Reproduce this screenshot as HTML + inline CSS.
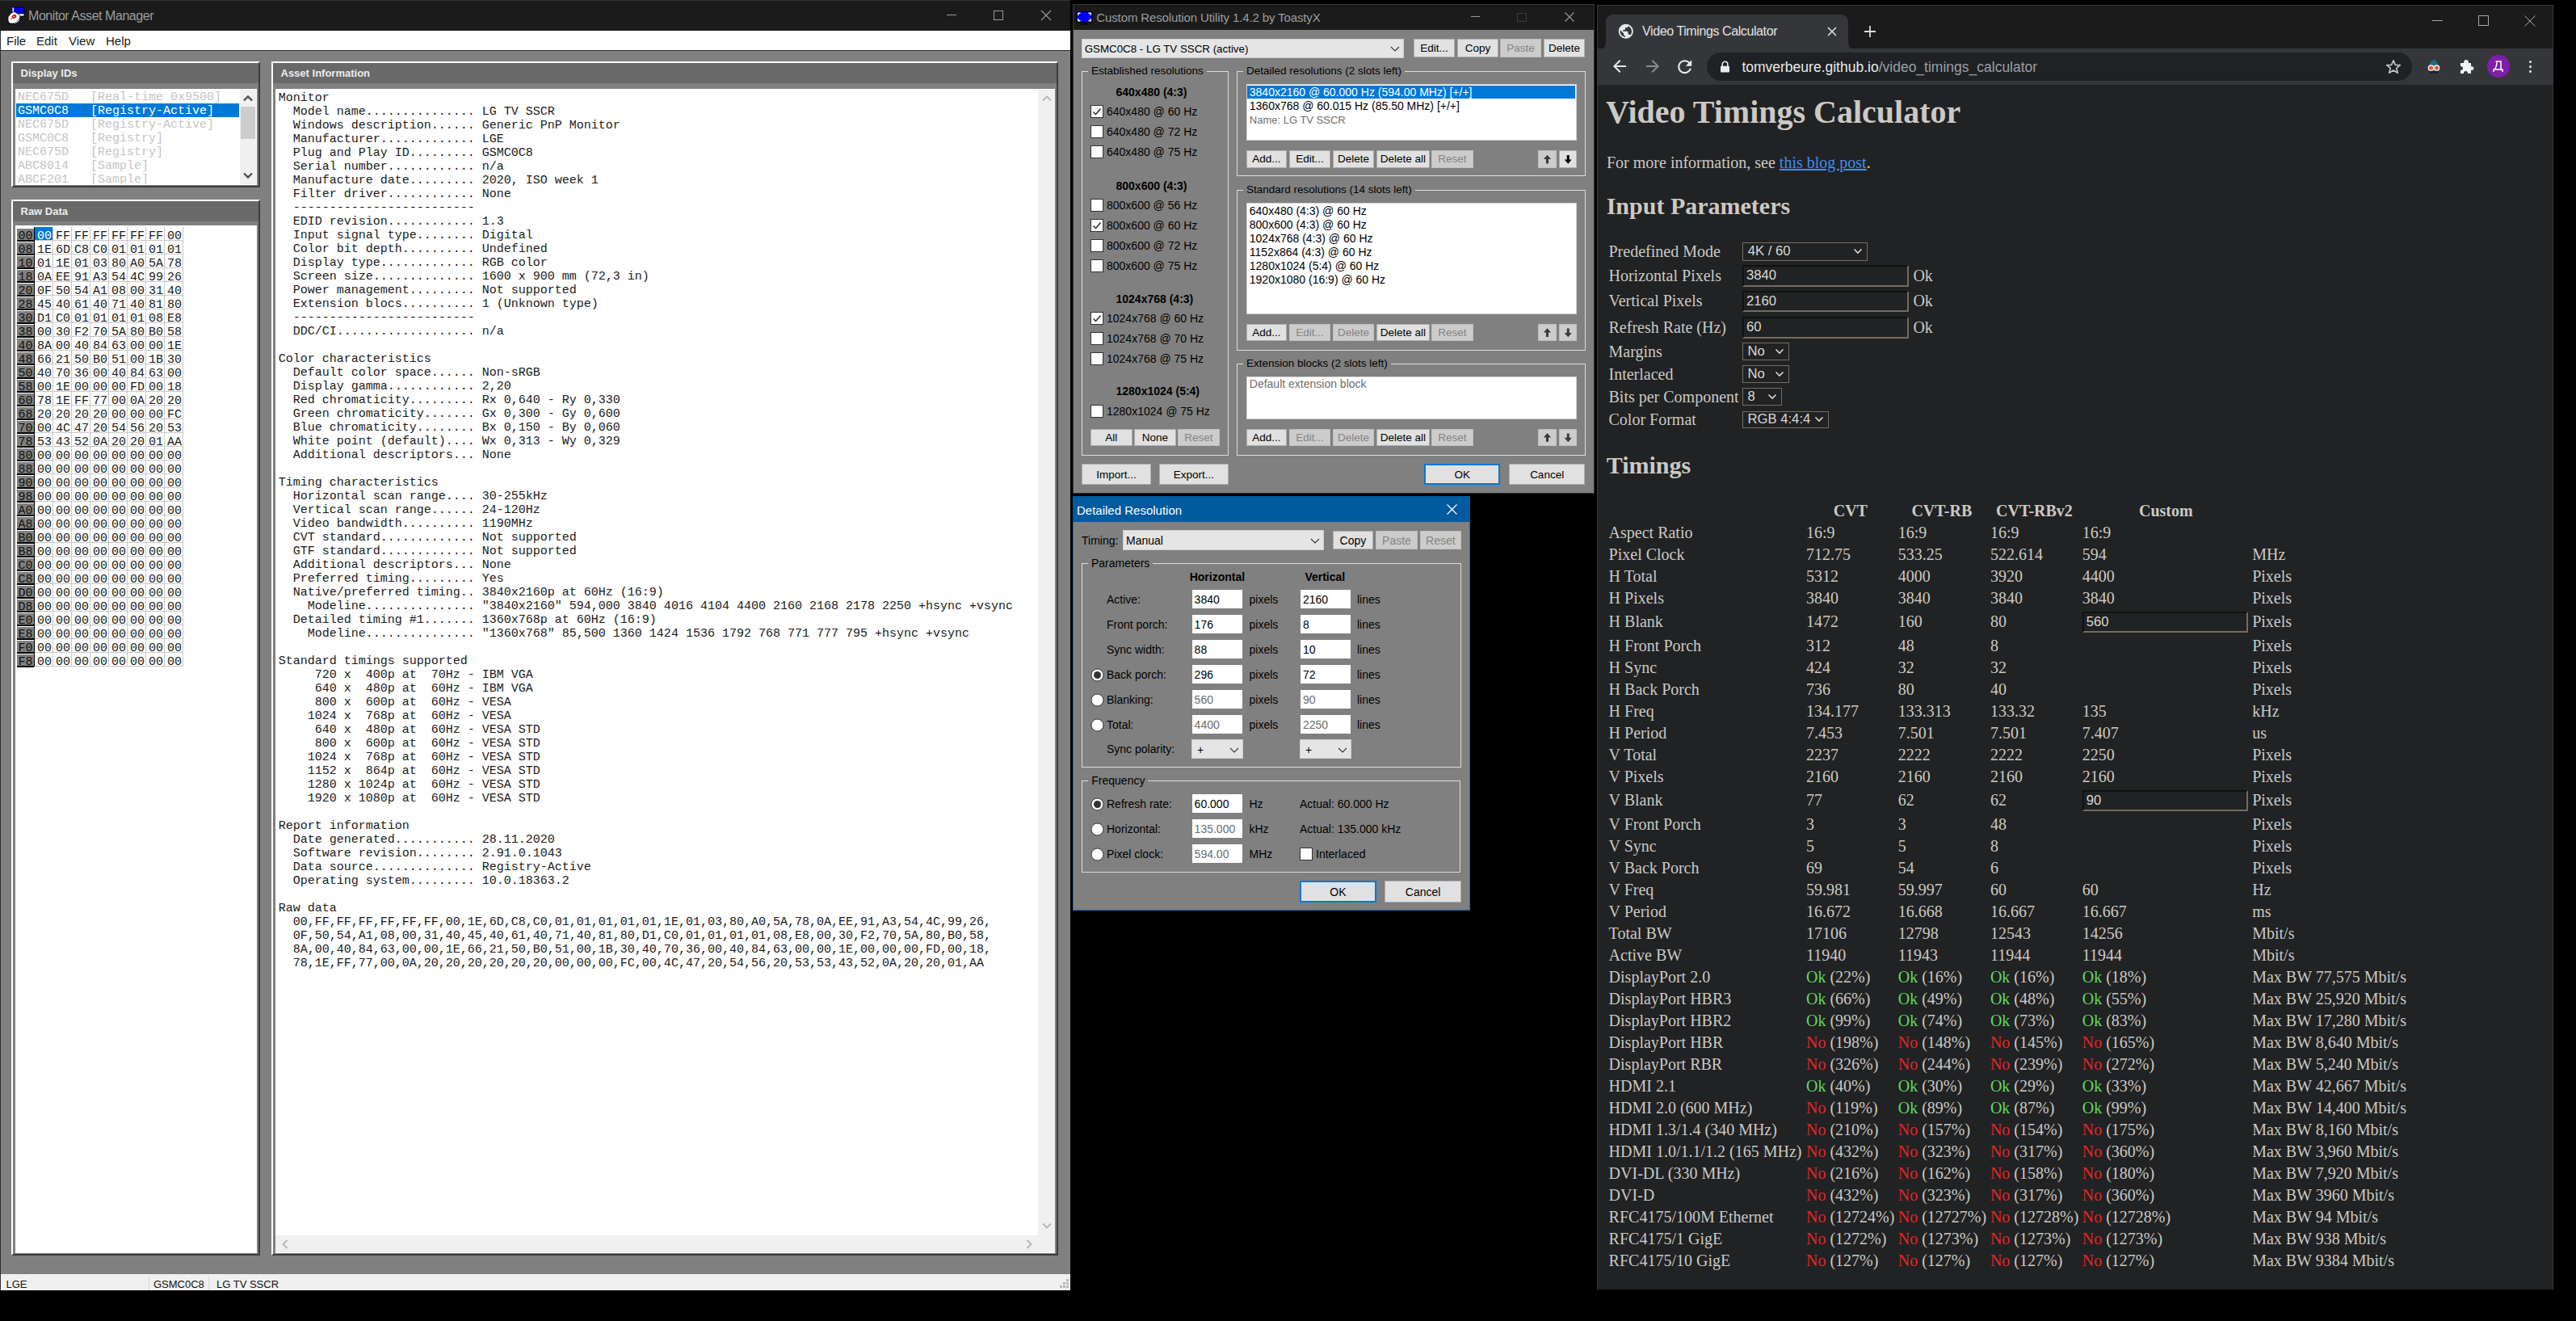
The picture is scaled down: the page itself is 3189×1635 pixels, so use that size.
<!DOCTYPE html>
<html><head><meta charset="utf-8"><title>Screen</title><style>*{box-sizing:border-box;margin:0;padding:0}
html,body{width:3189px;height:1635px;overflow:hidden;background:#000}
body{position:relative;font-family:"Liberation Sans",sans-serif}
.a{position:absolute}
.t{position:absolute;white-space:pre}
svg.a{overflow:visible}</style></head><body>
<div class="a" style="left:0.0px;top:0.0px;width:1325.0px;height:1597.0px;background:#808080;"></div>
<div class="a" style="left:0.0px;top:0.0px;width:1.0px;height:1597.0px;background:#2e2e2e;"></div>
<div class="a" style="left:0.0px;top:0.0px;width:1325.0px;height:37.7px;background:#1b1b1b;"></div>
<svg class="a" style="left:9.0px;top:8.0px;" width="22" height="22" viewBox="0 0 22 22"><defs><linearGradient id="ig" x1="0" y1="0" x2="0" y2="1"><stop offset="0" stop-color="#0000ff"/><stop offset="1" stop-color="#000090"/></linearGradient></defs><rect x="6" y="1" width="15" height="11" fill="url(#ig)" stroke="#000" stroke-width="0.8"/><rect x="6.5" y="1.5" width="1.5" height="9" fill="#fff"/><rect x="6.5" y="9.3" width="14" height="2.3" fill="#fff"/><path d="M1,13 L5,8 L9,6.5 L13,9 L16,12 L15,17 L11,21 L3,21 L1,18 Z" fill="#fff" stroke="#000" stroke-width="0.8"/><path d="M6,13.5 Q7,10.5 10,11 Q11.5,12 9.5,13.5 L6.5,14.5" stroke="#c00000" stroke-width="1.6" fill="none"/><circle cx="5" cy="15.5" r="0.8" fill="#d00"/><path d="M10,20 L15,15 M12,20 L15.5,16.5" stroke="#6a6aa8" stroke-width="1"/></svg>
<div class="t" style="left:35.0px;top:11.7px;font:16px/1 'Liberation Sans',sans-serif;color:#9d9d9d;letter-spacing:-0.45px;">Monitor Asset Manager</div>
<div class="a" style="left:0.0px;top:0.0px;width:1325.0px;height:1.0px;background:#333;"></div>
<div class="a" style="left:1172.0px;top:18.0px;width:12.0px;height:1.0px;background:#9a9a9a;"></div>
<div class="a" style="left:1230.0px;top:13.0px;width:12.0px;height:12.0px;border:1px solid #9a9a9a;"></div>
<svg class="a" style="left:1288.0px;top:12.0px;" width="14" height="14" viewBox="0 0 14 14"><path d="M1,1 L13,13 M13,1 L1,13" stroke="#9a9a9a" stroke-width="1.1"/></svg>
<div class="a" style="left:1.0px;top:37.7px;width:1324.0px;height:24.3px;background:#fff;"></div>
<div class="a" style="left:1.0px;top:62.0px;width:1324.0px;height:1.0px;background:#2c2c2c;"></div>
<div class="t" style="left:8.0px;top:43.2px;font:15px/1 'Liberation Sans',sans-serif;color:#1a1a1a;">File</div>
<div class="t" style="left:45.0px;top:43.2px;font:15px/1 'Liberation Sans',sans-serif;color:#1a1a1a;">Edit</div>
<div class="t" style="left:85.0px;top:43.2px;font:15px/1 'Liberation Sans',sans-serif;color:#1a1a1a;">View</div>
<div class="t" style="left:131.0px;top:43.2px;font:15px/1 'Liberation Sans',sans-serif;color:#1a1a1a;">Help</div>
<div class="a" style="left:1.0px;top:1577.0px;width:1324.0px;height:20.0px;background:#f0f0f0;"></div>
<div class="t" style="left:7.5px;top:1583.0px;font:13px/1 'Liberation Sans',sans-serif;color:#111;">LGE</div>
<div class="a" style="left:184.0px;top:1580.0px;width:1.0px;height:17.0px;background:#d9d9d9;"></div>
<div class="t" style="left:190.0px;top:1583.0px;font:13px/1 'Liberation Sans',sans-serif;color:#111;">GSMC0C8</div>
<div class="a" style="left:258.0px;top:1580.0px;width:1.0px;height:17.0px;background:#d9d9d9;"></div>
<div class="t" style="left:268.0px;top:1583.0px;font:13px/1 'Liberation Sans',sans-serif;color:#111;">LG TV SSCR</div>
<div class="a" style="left:1320.0px;top:1583.0px;width:3.0px;height:3.0px;background:#b8b8b8;"></div>
<div class="a" style="left:1316.0px;top:1587.0px;width:3.0px;height:3.0px;background:#b8b8b8;"></div>
<div class="a" style="left:1320.0px;top:1587.0px;width:3.0px;height:3.0px;background:#b8b8b8;"></div>
<div class="a" style="left:1312.0px;top:1591.0px;width:3.0px;height:3.0px;background:#b8b8b8;"></div>
<div class="a" style="left:1316.0px;top:1591.0px;width:3.0px;height:3.0px;background:#b8b8b8;"></div>
<div class="a" style="left:1320.0px;top:1591.0px;width:3.0px;height:3.0px;background:#b8b8b8;"></div>
<div class="a" style="left:14.0px;top:76.0px;width:308.0px;height:156.0px;background:#808080;border-top:2px solid #fff;border-left:2px solid #fff;border-right:2px solid #3c3c3c;border-bottom:2px solid #3c3c3c;"></div>
<div class="a" style="left:16.0px;top:78.0px;width:304.0px;height:25.0px;background:#696969;"></div>
<div class="t" style="left:25.5px;top:84.0px;font:13px/1 'Liberation Sans',sans-serif;font-weight:700;color:#ededed;">Display IDs</div>
<div class="a" style="left:19.0px;top:110.0px;width:299.0px;height:119.0px;background:#fff;"></div>
<div class="a" style="left:20.0px;top:128.0px;width:276.0px;height:17.0px;background:#0078d7;"></div>
<div class="a" style="left:19.0px;top:111.0px;width:278.0px;height:117.0px;overflow:hidden;"><div class="t" style="left:3.0px;top:2.4px;font:15px/1 'Liberation Mono',monospace;color:#c4c4c4;">NEC675D</div><div class="t" style="left:93.0px;top:2.4px;font:15px/1 'Liberation Mono',monospace;color:#c4c4c4;">[Real-time 0x9500]</div><div class="t" style="left:3.0px;top:19.4px;font:15px/1 'Liberation Mono',monospace;color:#fff;">GSMC0C8</div><div class="t" style="left:93.0px;top:19.4px;font:15px/1 'Liberation Mono',monospace;color:#fff;">[Registry-Active]</div><div class="t" style="left:3.0px;top:36.4px;font:15px/1 'Liberation Mono',monospace;color:#c4c4c4;">NEC675D</div><div class="t" style="left:93.0px;top:36.4px;font:15px/1 'Liberation Mono',monospace;color:#c4c4c4;">[Registry-Active]</div><div class="t" style="left:3.0px;top:53.4px;font:15px/1 'Liberation Mono',monospace;color:#c4c4c4;">GSMC0C8</div><div class="t" style="left:93.0px;top:53.4px;font:15px/1 'Liberation Mono',monospace;color:#c4c4c4;">[Registry]</div><div class="t" style="left:3.0px;top:70.4px;font:15px/1 'Liberation Mono',monospace;color:#c4c4c4;">NEC675D</div><div class="t" style="left:93.0px;top:70.4px;font:15px/1 'Liberation Mono',monospace;color:#c4c4c4;">[Registry]</div><div class="t" style="left:3.0px;top:87.4px;font:15px/1 'Liberation Mono',monospace;color:#c4c4c4;">ABC8014</div><div class="t" style="left:93.0px;top:87.4px;font:15px/1 'Liberation Mono',monospace;color:#c4c4c4;">[Sample]</div><div class="t" style="left:3.0px;top:104.4px;font:15px/1 'Liberation Mono',monospace;color:#c4c4c4;">ABCF201</div><div class="t" style="left:93.0px;top:104.4px;font:15px/1 'Liberation Mono',monospace;color:#c4c4c4;">[Sample]</div></div>
<div class="a" style="left:297.0px;top:111.0px;width:20.0px;height:117.0px;background:#f0f0f0;"></div>
<div class="a" style="left:298.0px;top:132.0px;width:18.0px;height:40.0px;background:#cdcdcd;"></div>
<svg class="a" style="left:300.0px;top:115.0px;" width="14" height="14" viewBox="0 0 14 14"><path d="M-5,2.5 L0,-2.5 L5,2.5" transform="translate(7.0,7.0)" fill="none" stroke="#505050" stroke-width="2.4"/></svg>
<svg class="a" style="left:300.0px;top:209.5px;" width="14" height="14" viewBox="0 0 14 14"><path d="M-5,-2.5 L0,2.5 L5,-2.5" transform="translate(7.0,7.0)" fill="none" stroke="#505050" stroke-width="2.4"/></svg>
<div class="a" style="left:14.0px;top:247.0px;width:308.0px;height:1307.0px;background:#808080;border-top:2px solid #fff;border-left:2px solid #fff;border-right:2px solid #3c3c3c;border-bottom:2px solid #3c3c3c;"></div>
<div class="a" style="left:16.0px;top:249.0px;width:304.0px;height:25.0px;background:#696969;"></div>
<div class="t" style="left:25.5px;top:254.9px;font:13px/1 'Liberation Sans',sans-serif;font-weight:700;color:#ededed;">Raw Data</div>
<div class="a" style="left:19.0px;top:279.0px;width:299.0px;height:1272.0px;background:#fff;"></div>
<div class="a" style="left:21.0px;top:282.0px;width:21.0px;height:15.0px;background:#808080;border-top:1px solid #fff;"></div>
<div class="a" style="left:21.0px;top:297.0px;width:21.0px;height:1.5px;background:#000;"></div>
<div class="t" style="left:22.5px;top:284.6px;font:15px/1 'Liberation Mono',monospace;color:#111;">00</div>
<div class="a" style="left:43.0px;top:281.0px;width:22.0px;height:16.0px;background:#0078d7;"></div>
<div class="t" style="left:46.0px;top:284.6px;font:15px/1 'Liberation Mono',monospace;color:#fff;">00</div>
<div class="t" style="left:69.0px;top:284.6px;font:15px/1 'Liberation Mono',monospace;color:#1a1a1a;">FF</div>
<div class="t" style="left:92.0px;top:284.6px;font:15px/1 'Liberation Mono',monospace;color:#1a1a1a;">FF</div>
<div class="t" style="left:115.0px;top:284.6px;font:15px/1 'Liberation Mono',monospace;color:#1a1a1a;">FF</div>
<div class="t" style="left:138.0px;top:284.6px;font:15px/1 'Liberation Mono',monospace;color:#1a1a1a;">FF</div>
<div class="t" style="left:161.0px;top:284.6px;font:15px/1 'Liberation Mono',monospace;color:#1a1a1a;">FF</div>
<div class="t" style="left:184.0px;top:284.6px;font:15px/1 'Liberation Mono',monospace;color:#1a1a1a;">FF</div>
<div class="t" style="left:207.0px;top:284.6px;font:15px/1 'Liberation Mono',monospace;color:#1a1a1a;">00</div>
<div class="a" style="left:21.0px;top:299.0px;width:21.0px;height:15.0px;background:#808080;border-top:1px solid #fff;"></div>
<div class="a" style="left:21.0px;top:314.0px;width:21.0px;height:1.5px;background:#000;"></div>
<div class="t" style="left:22.5px;top:301.6px;font:15px/1 'Liberation Mono',monospace;color:#111;">08</div>
<div class="t" style="left:46.0px;top:301.6px;font:15px/1 'Liberation Mono',monospace;color:#1a1a1a;">1E</div>
<div class="t" style="left:69.0px;top:301.6px;font:15px/1 'Liberation Mono',monospace;color:#1a1a1a;">6D</div>
<div class="t" style="left:92.0px;top:301.6px;font:15px/1 'Liberation Mono',monospace;color:#1a1a1a;">C8</div>
<div class="t" style="left:115.0px;top:301.6px;font:15px/1 'Liberation Mono',monospace;color:#1a1a1a;">C0</div>
<div class="t" style="left:138.0px;top:301.6px;font:15px/1 'Liberation Mono',monospace;color:#1a1a1a;">01</div>
<div class="t" style="left:161.0px;top:301.6px;font:15px/1 'Liberation Mono',monospace;color:#1a1a1a;">01</div>
<div class="t" style="left:184.0px;top:301.6px;font:15px/1 'Liberation Mono',monospace;color:#1a1a1a;">01</div>
<div class="t" style="left:207.0px;top:301.6px;font:15px/1 'Liberation Mono',monospace;color:#1a1a1a;">01</div>
<div class="a" style="left:21.0px;top:316.0px;width:21.0px;height:15.0px;background:#808080;border-top:1px solid #fff;"></div>
<div class="a" style="left:21.0px;top:331.0px;width:21.0px;height:1.5px;background:#000;"></div>
<div class="t" style="left:22.5px;top:318.6px;font:15px/1 'Liberation Mono',monospace;color:#111;">10</div>
<div class="t" style="left:46.0px;top:318.6px;font:15px/1 'Liberation Mono',monospace;color:#1a1a1a;">01</div>
<div class="t" style="left:69.0px;top:318.6px;font:15px/1 'Liberation Mono',monospace;color:#1a1a1a;">1E</div>
<div class="t" style="left:92.0px;top:318.6px;font:15px/1 'Liberation Mono',monospace;color:#1a1a1a;">01</div>
<div class="t" style="left:115.0px;top:318.6px;font:15px/1 'Liberation Mono',monospace;color:#1a1a1a;">03</div>
<div class="t" style="left:138.0px;top:318.6px;font:15px/1 'Liberation Mono',monospace;color:#1a1a1a;">80</div>
<div class="t" style="left:161.0px;top:318.6px;font:15px/1 'Liberation Mono',monospace;color:#1a1a1a;">A0</div>
<div class="t" style="left:184.0px;top:318.6px;font:15px/1 'Liberation Mono',monospace;color:#1a1a1a;">5A</div>
<div class="t" style="left:207.0px;top:318.6px;font:15px/1 'Liberation Mono',monospace;color:#1a1a1a;">78</div>
<div class="a" style="left:21.0px;top:333.0px;width:21.0px;height:15.0px;background:#808080;border-top:1px solid #fff;"></div>
<div class="a" style="left:21.0px;top:348.0px;width:21.0px;height:1.5px;background:#000;"></div>
<div class="t" style="left:22.5px;top:335.6px;font:15px/1 'Liberation Mono',monospace;color:#111;">18</div>
<div class="t" style="left:46.0px;top:335.6px;font:15px/1 'Liberation Mono',monospace;color:#1a1a1a;">0A</div>
<div class="t" style="left:69.0px;top:335.6px;font:15px/1 'Liberation Mono',monospace;color:#1a1a1a;">EE</div>
<div class="t" style="left:92.0px;top:335.6px;font:15px/1 'Liberation Mono',monospace;color:#1a1a1a;">91</div>
<div class="t" style="left:115.0px;top:335.6px;font:15px/1 'Liberation Mono',monospace;color:#1a1a1a;">A3</div>
<div class="t" style="left:138.0px;top:335.6px;font:15px/1 'Liberation Mono',monospace;color:#1a1a1a;">54</div>
<div class="t" style="left:161.0px;top:335.6px;font:15px/1 'Liberation Mono',monospace;color:#1a1a1a;">4C</div>
<div class="t" style="left:184.0px;top:335.6px;font:15px/1 'Liberation Mono',monospace;color:#1a1a1a;">99</div>
<div class="t" style="left:207.0px;top:335.6px;font:15px/1 'Liberation Mono',monospace;color:#1a1a1a;">26</div>
<div class="a" style="left:21.0px;top:350.0px;width:21.0px;height:15.0px;background:#808080;border-top:1px solid #fff;"></div>
<div class="a" style="left:21.0px;top:365.0px;width:21.0px;height:1.5px;background:#000;"></div>
<div class="t" style="left:22.5px;top:352.6px;font:15px/1 'Liberation Mono',monospace;color:#111;">20</div>
<div class="t" style="left:46.0px;top:352.6px;font:15px/1 'Liberation Mono',monospace;color:#1a1a1a;">0F</div>
<div class="t" style="left:69.0px;top:352.6px;font:15px/1 'Liberation Mono',monospace;color:#1a1a1a;">50</div>
<div class="t" style="left:92.0px;top:352.6px;font:15px/1 'Liberation Mono',monospace;color:#1a1a1a;">54</div>
<div class="t" style="left:115.0px;top:352.6px;font:15px/1 'Liberation Mono',monospace;color:#1a1a1a;">A1</div>
<div class="t" style="left:138.0px;top:352.6px;font:15px/1 'Liberation Mono',monospace;color:#1a1a1a;">08</div>
<div class="t" style="left:161.0px;top:352.6px;font:15px/1 'Liberation Mono',monospace;color:#1a1a1a;">00</div>
<div class="t" style="left:184.0px;top:352.6px;font:15px/1 'Liberation Mono',monospace;color:#1a1a1a;">31</div>
<div class="t" style="left:207.0px;top:352.6px;font:15px/1 'Liberation Mono',monospace;color:#1a1a1a;">40</div>
<div class="a" style="left:21.0px;top:367.0px;width:21.0px;height:15.0px;background:#808080;border-top:1px solid #fff;"></div>
<div class="a" style="left:21.0px;top:382.0px;width:21.0px;height:1.5px;background:#000;"></div>
<div class="t" style="left:22.5px;top:369.6px;font:15px/1 'Liberation Mono',monospace;color:#111;">28</div>
<div class="t" style="left:46.0px;top:369.6px;font:15px/1 'Liberation Mono',monospace;color:#1a1a1a;">45</div>
<div class="t" style="left:69.0px;top:369.6px;font:15px/1 'Liberation Mono',monospace;color:#1a1a1a;">40</div>
<div class="t" style="left:92.0px;top:369.6px;font:15px/1 'Liberation Mono',monospace;color:#1a1a1a;">61</div>
<div class="t" style="left:115.0px;top:369.6px;font:15px/1 'Liberation Mono',monospace;color:#1a1a1a;">40</div>
<div class="t" style="left:138.0px;top:369.6px;font:15px/1 'Liberation Mono',monospace;color:#1a1a1a;">71</div>
<div class="t" style="left:161.0px;top:369.6px;font:15px/1 'Liberation Mono',monospace;color:#1a1a1a;">40</div>
<div class="t" style="left:184.0px;top:369.6px;font:15px/1 'Liberation Mono',monospace;color:#1a1a1a;">81</div>
<div class="t" style="left:207.0px;top:369.6px;font:15px/1 'Liberation Mono',monospace;color:#1a1a1a;">80</div>
<div class="a" style="left:21.0px;top:384.0px;width:21.0px;height:15.0px;background:#808080;border-top:1px solid #fff;"></div>
<div class="a" style="left:21.0px;top:399.0px;width:21.0px;height:1.5px;background:#000;"></div>
<div class="t" style="left:22.5px;top:386.6px;font:15px/1 'Liberation Mono',monospace;color:#111;">30</div>
<div class="t" style="left:46.0px;top:386.6px;font:15px/1 'Liberation Mono',monospace;color:#1a1a1a;">D1</div>
<div class="t" style="left:69.0px;top:386.6px;font:15px/1 'Liberation Mono',monospace;color:#1a1a1a;">C0</div>
<div class="t" style="left:92.0px;top:386.6px;font:15px/1 'Liberation Mono',monospace;color:#1a1a1a;">01</div>
<div class="t" style="left:115.0px;top:386.6px;font:15px/1 'Liberation Mono',monospace;color:#1a1a1a;">01</div>
<div class="t" style="left:138.0px;top:386.6px;font:15px/1 'Liberation Mono',monospace;color:#1a1a1a;">01</div>
<div class="t" style="left:161.0px;top:386.6px;font:15px/1 'Liberation Mono',monospace;color:#1a1a1a;">01</div>
<div class="t" style="left:184.0px;top:386.6px;font:15px/1 'Liberation Mono',monospace;color:#1a1a1a;">08</div>
<div class="t" style="left:207.0px;top:386.6px;font:15px/1 'Liberation Mono',monospace;color:#1a1a1a;">E8</div>
<div class="a" style="left:21.0px;top:401.0px;width:21.0px;height:15.0px;background:#808080;border-top:1px solid #fff;"></div>
<div class="a" style="left:21.0px;top:416.0px;width:21.0px;height:1.5px;background:#000;"></div>
<div class="t" style="left:22.5px;top:403.6px;font:15px/1 'Liberation Mono',monospace;color:#111;">38</div>
<div class="t" style="left:46.0px;top:403.6px;font:15px/1 'Liberation Mono',monospace;color:#1a1a1a;">00</div>
<div class="t" style="left:69.0px;top:403.6px;font:15px/1 'Liberation Mono',monospace;color:#1a1a1a;">30</div>
<div class="t" style="left:92.0px;top:403.6px;font:15px/1 'Liberation Mono',monospace;color:#1a1a1a;">F2</div>
<div class="t" style="left:115.0px;top:403.6px;font:15px/1 'Liberation Mono',monospace;color:#1a1a1a;">70</div>
<div class="t" style="left:138.0px;top:403.6px;font:15px/1 'Liberation Mono',monospace;color:#1a1a1a;">5A</div>
<div class="t" style="left:161.0px;top:403.6px;font:15px/1 'Liberation Mono',monospace;color:#1a1a1a;">80</div>
<div class="t" style="left:184.0px;top:403.6px;font:15px/1 'Liberation Mono',monospace;color:#1a1a1a;">B0</div>
<div class="t" style="left:207.0px;top:403.6px;font:15px/1 'Liberation Mono',monospace;color:#1a1a1a;">58</div>
<div class="a" style="left:21.0px;top:418.0px;width:21.0px;height:15.0px;background:#808080;border-top:1px solid #fff;"></div>
<div class="a" style="left:21.0px;top:433.0px;width:21.0px;height:1.5px;background:#000;"></div>
<div class="t" style="left:22.5px;top:420.6px;font:15px/1 'Liberation Mono',monospace;color:#111;">40</div>
<div class="t" style="left:46.0px;top:420.6px;font:15px/1 'Liberation Mono',monospace;color:#1a1a1a;">8A</div>
<div class="t" style="left:69.0px;top:420.6px;font:15px/1 'Liberation Mono',monospace;color:#1a1a1a;">00</div>
<div class="t" style="left:92.0px;top:420.6px;font:15px/1 'Liberation Mono',monospace;color:#1a1a1a;">40</div>
<div class="t" style="left:115.0px;top:420.6px;font:15px/1 'Liberation Mono',monospace;color:#1a1a1a;">84</div>
<div class="t" style="left:138.0px;top:420.6px;font:15px/1 'Liberation Mono',monospace;color:#1a1a1a;">63</div>
<div class="t" style="left:161.0px;top:420.6px;font:15px/1 'Liberation Mono',monospace;color:#1a1a1a;">00</div>
<div class="t" style="left:184.0px;top:420.6px;font:15px/1 'Liberation Mono',monospace;color:#1a1a1a;">00</div>
<div class="t" style="left:207.0px;top:420.6px;font:15px/1 'Liberation Mono',monospace;color:#1a1a1a;">1E</div>
<div class="a" style="left:21.0px;top:435.0px;width:21.0px;height:15.0px;background:#808080;border-top:1px solid #fff;"></div>
<div class="a" style="left:21.0px;top:450.0px;width:21.0px;height:1.5px;background:#000;"></div>
<div class="t" style="left:22.5px;top:437.6px;font:15px/1 'Liberation Mono',monospace;color:#111;">48</div>
<div class="t" style="left:46.0px;top:437.6px;font:15px/1 'Liberation Mono',monospace;color:#1a1a1a;">66</div>
<div class="t" style="left:69.0px;top:437.6px;font:15px/1 'Liberation Mono',monospace;color:#1a1a1a;">21</div>
<div class="t" style="left:92.0px;top:437.6px;font:15px/1 'Liberation Mono',monospace;color:#1a1a1a;">50</div>
<div class="t" style="left:115.0px;top:437.6px;font:15px/1 'Liberation Mono',monospace;color:#1a1a1a;">B0</div>
<div class="t" style="left:138.0px;top:437.6px;font:15px/1 'Liberation Mono',monospace;color:#1a1a1a;">51</div>
<div class="t" style="left:161.0px;top:437.6px;font:15px/1 'Liberation Mono',monospace;color:#1a1a1a;">00</div>
<div class="t" style="left:184.0px;top:437.6px;font:15px/1 'Liberation Mono',monospace;color:#1a1a1a;">1B</div>
<div class="t" style="left:207.0px;top:437.6px;font:15px/1 'Liberation Mono',monospace;color:#1a1a1a;">30</div>
<div class="a" style="left:21.0px;top:452.0px;width:21.0px;height:15.0px;background:#808080;border-top:1px solid #fff;"></div>
<div class="a" style="left:21.0px;top:467.0px;width:21.0px;height:1.5px;background:#000;"></div>
<div class="t" style="left:22.5px;top:454.6px;font:15px/1 'Liberation Mono',monospace;color:#111;">50</div>
<div class="t" style="left:46.0px;top:454.6px;font:15px/1 'Liberation Mono',monospace;color:#1a1a1a;">40</div>
<div class="t" style="left:69.0px;top:454.6px;font:15px/1 'Liberation Mono',monospace;color:#1a1a1a;">70</div>
<div class="t" style="left:92.0px;top:454.6px;font:15px/1 'Liberation Mono',monospace;color:#1a1a1a;">36</div>
<div class="t" style="left:115.0px;top:454.6px;font:15px/1 'Liberation Mono',monospace;color:#1a1a1a;">00</div>
<div class="t" style="left:138.0px;top:454.6px;font:15px/1 'Liberation Mono',monospace;color:#1a1a1a;">40</div>
<div class="t" style="left:161.0px;top:454.6px;font:15px/1 'Liberation Mono',monospace;color:#1a1a1a;">84</div>
<div class="t" style="left:184.0px;top:454.6px;font:15px/1 'Liberation Mono',monospace;color:#1a1a1a;">63</div>
<div class="t" style="left:207.0px;top:454.6px;font:15px/1 'Liberation Mono',monospace;color:#1a1a1a;">00</div>
<div class="a" style="left:21.0px;top:469.0px;width:21.0px;height:15.0px;background:#808080;border-top:1px solid #fff;"></div>
<div class="a" style="left:21.0px;top:484.0px;width:21.0px;height:1.5px;background:#000;"></div>
<div class="t" style="left:22.5px;top:471.6px;font:15px/1 'Liberation Mono',monospace;color:#111;">58</div>
<div class="t" style="left:46.0px;top:471.6px;font:15px/1 'Liberation Mono',monospace;color:#1a1a1a;">00</div>
<div class="t" style="left:69.0px;top:471.6px;font:15px/1 'Liberation Mono',monospace;color:#1a1a1a;">1E</div>
<div class="t" style="left:92.0px;top:471.6px;font:15px/1 'Liberation Mono',monospace;color:#1a1a1a;">00</div>
<div class="t" style="left:115.0px;top:471.6px;font:15px/1 'Liberation Mono',monospace;color:#1a1a1a;">00</div>
<div class="t" style="left:138.0px;top:471.6px;font:15px/1 'Liberation Mono',monospace;color:#1a1a1a;">00</div>
<div class="t" style="left:161.0px;top:471.6px;font:15px/1 'Liberation Mono',monospace;color:#1a1a1a;">FD</div>
<div class="t" style="left:184.0px;top:471.6px;font:15px/1 'Liberation Mono',monospace;color:#1a1a1a;">00</div>
<div class="t" style="left:207.0px;top:471.6px;font:15px/1 'Liberation Mono',monospace;color:#1a1a1a;">18</div>
<div class="a" style="left:21.0px;top:486.0px;width:21.0px;height:15.0px;background:#808080;border-top:1px solid #fff;"></div>
<div class="a" style="left:21.0px;top:501.0px;width:21.0px;height:1.5px;background:#000;"></div>
<div class="t" style="left:22.5px;top:488.6px;font:15px/1 'Liberation Mono',monospace;color:#111;">60</div>
<div class="t" style="left:46.0px;top:488.6px;font:15px/1 'Liberation Mono',monospace;color:#1a1a1a;">78</div>
<div class="t" style="left:69.0px;top:488.6px;font:15px/1 'Liberation Mono',monospace;color:#1a1a1a;">1E</div>
<div class="t" style="left:92.0px;top:488.6px;font:15px/1 'Liberation Mono',monospace;color:#1a1a1a;">FF</div>
<div class="t" style="left:115.0px;top:488.6px;font:15px/1 'Liberation Mono',monospace;color:#1a1a1a;">77</div>
<div class="t" style="left:138.0px;top:488.6px;font:15px/1 'Liberation Mono',monospace;color:#1a1a1a;">00</div>
<div class="t" style="left:161.0px;top:488.6px;font:15px/1 'Liberation Mono',monospace;color:#1a1a1a;">0A</div>
<div class="t" style="left:184.0px;top:488.6px;font:15px/1 'Liberation Mono',monospace;color:#1a1a1a;">20</div>
<div class="t" style="left:207.0px;top:488.6px;font:15px/1 'Liberation Mono',monospace;color:#1a1a1a;">20</div>
<div class="a" style="left:21.0px;top:503.0px;width:21.0px;height:15.0px;background:#808080;border-top:1px solid #fff;"></div>
<div class="a" style="left:21.0px;top:518.0px;width:21.0px;height:1.5px;background:#000;"></div>
<div class="t" style="left:22.5px;top:505.6px;font:15px/1 'Liberation Mono',monospace;color:#111;">68</div>
<div class="t" style="left:46.0px;top:505.6px;font:15px/1 'Liberation Mono',monospace;color:#1a1a1a;">20</div>
<div class="t" style="left:69.0px;top:505.6px;font:15px/1 'Liberation Mono',monospace;color:#1a1a1a;">20</div>
<div class="t" style="left:92.0px;top:505.6px;font:15px/1 'Liberation Mono',monospace;color:#1a1a1a;">20</div>
<div class="t" style="left:115.0px;top:505.6px;font:15px/1 'Liberation Mono',monospace;color:#1a1a1a;">20</div>
<div class="t" style="left:138.0px;top:505.6px;font:15px/1 'Liberation Mono',monospace;color:#1a1a1a;">00</div>
<div class="t" style="left:161.0px;top:505.6px;font:15px/1 'Liberation Mono',monospace;color:#1a1a1a;">00</div>
<div class="t" style="left:184.0px;top:505.6px;font:15px/1 'Liberation Mono',monospace;color:#1a1a1a;">00</div>
<div class="t" style="left:207.0px;top:505.6px;font:15px/1 'Liberation Mono',monospace;color:#1a1a1a;">FC</div>
<div class="a" style="left:21.0px;top:520.0px;width:21.0px;height:15.0px;background:#808080;border-top:1px solid #fff;"></div>
<div class="a" style="left:21.0px;top:535.0px;width:21.0px;height:1.5px;background:#000;"></div>
<div class="t" style="left:22.5px;top:522.6px;font:15px/1 'Liberation Mono',monospace;color:#111;">70</div>
<div class="t" style="left:46.0px;top:522.6px;font:15px/1 'Liberation Mono',monospace;color:#1a1a1a;">00</div>
<div class="t" style="left:69.0px;top:522.6px;font:15px/1 'Liberation Mono',monospace;color:#1a1a1a;">4C</div>
<div class="t" style="left:92.0px;top:522.6px;font:15px/1 'Liberation Mono',monospace;color:#1a1a1a;">47</div>
<div class="t" style="left:115.0px;top:522.6px;font:15px/1 'Liberation Mono',monospace;color:#1a1a1a;">20</div>
<div class="t" style="left:138.0px;top:522.6px;font:15px/1 'Liberation Mono',monospace;color:#1a1a1a;">54</div>
<div class="t" style="left:161.0px;top:522.6px;font:15px/1 'Liberation Mono',monospace;color:#1a1a1a;">56</div>
<div class="t" style="left:184.0px;top:522.6px;font:15px/1 'Liberation Mono',monospace;color:#1a1a1a;">20</div>
<div class="t" style="left:207.0px;top:522.6px;font:15px/1 'Liberation Mono',monospace;color:#1a1a1a;">53</div>
<div class="a" style="left:21.0px;top:537.0px;width:21.0px;height:15.0px;background:#808080;border-top:1px solid #fff;"></div>
<div class="a" style="left:21.0px;top:552.0px;width:21.0px;height:1.5px;background:#000;"></div>
<div class="t" style="left:22.5px;top:539.6px;font:15px/1 'Liberation Mono',monospace;color:#111;">78</div>
<div class="t" style="left:46.0px;top:539.6px;font:15px/1 'Liberation Mono',monospace;color:#1a1a1a;">53</div>
<div class="t" style="left:69.0px;top:539.6px;font:15px/1 'Liberation Mono',monospace;color:#1a1a1a;">43</div>
<div class="t" style="left:92.0px;top:539.6px;font:15px/1 'Liberation Mono',monospace;color:#1a1a1a;">52</div>
<div class="t" style="left:115.0px;top:539.6px;font:15px/1 'Liberation Mono',monospace;color:#1a1a1a;">0A</div>
<div class="t" style="left:138.0px;top:539.6px;font:15px/1 'Liberation Mono',monospace;color:#1a1a1a;">20</div>
<div class="t" style="left:161.0px;top:539.6px;font:15px/1 'Liberation Mono',monospace;color:#1a1a1a;">20</div>
<div class="t" style="left:184.0px;top:539.6px;font:15px/1 'Liberation Mono',monospace;color:#1a1a1a;">01</div>
<div class="t" style="left:207.0px;top:539.6px;font:15px/1 'Liberation Mono',monospace;color:#1a1a1a;">AA</div>
<div class="a" style="left:21.0px;top:554.0px;width:21.0px;height:15.0px;background:#808080;border-top:1px solid #fff;"></div>
<div class="a" style="left:21.0px;top:569.0px;width:21.0px;height:1.5px;background:#000;"></div>
<div class="t" style="left:22.5px;top:556.6px;font:15px/1 'Liberation Mono',monospace;color:#111;">80</div>
<div class="t" style="left:46.0px;top:556.6px;font:15px/1 'Liberation Mono',monospace;color:#1a1a1a;">00</div>
<div class="t" style="left:69.0px;top:556.6px;font:15px/1 'Liberation Mono',monospace;color:#1a1a1a;">00</div>
<div class="t" style="left:92.0px;top:556.6px;font:15px/1 'Liberation Mono',monospace;color:#1a1a1a;">00</div>
<div class="t" style="left:115.0px;top:556.6px;font:15px/1 'Liberation Mono',monospace;color:#1a1a1a;">00</div>
<div class="t" style="left:138.0px;top:556.6px;font:15px/1 'Liberation Mono',monospace;color:#1a1a1a;">00</div>
<div class="t" style="left:161.0px;top:556.6px;font:15px/1 'Liberation Mono',monospace;color:#1a1a1a;">00</div>
<div class="t" style="left:184.0px;top:556.6px;font:15px/1 'Liberation Mono',monospace;color:#1a1a1a;">00</div>
<div class="t" style="left:207.0px;top:556.6px;font:15px/1 'Liberation Mono',monospace;color:#1a1a1a;">00</div>
<div class="a" style="left:21.0px;top:571.0px;width:21.0px;height:15.0px;background:#808080;border-top:1px solid #fff;"></div>
<div class="a" style="left:21.0px;top:586.0px;width:21.0px;height:1.5px;background:#000;"></div>
<div class="t" style="left:22.5px;top:573.6px;font:15px/1 'Liberation Mono',monospace;color:#111;">88</div>
<div class="t" style="left:46.0px;top:573.6px;font:15px/1 'Liberation Mono',monospace;color:#1a1a1a;">00</div>
<div class="t" style="left:69.0px;top:573.6px;font:15px/1 'Liberation Mono',monospace;color:#1a1a1a;">00</div>
<div class="t" style="left:92.0px;top:573.6px;font:15px/1 'Liberation Mono',monospace;color:#1a1a1a;">00</div>
<div class="t" style="left:115.0px;top:573.6px;font:15px/1 'Liberation Mono',monospace;color:#1a1a1a;">00</div>
<div class="t" style="left:138.0px;top:573.6px;font:15px/1 'Liberation Mono',monospace;color:#1a1a1a;">00</div>
<div class="t" style="left:161.0px;top:573.6px;font:15px/1 'Liberation Mono',monospace;color:#1a1a1a;">00</div>
<div class="t" style="left:184.0px;top:573.6px;font:15px/1 'Liberation Mono',monospace;color:#1a1a1a;">00</div>
<div class="t" style="left:207.0px;top:573.6px;font:15px/1 'Liberation Mono',monospace;color:#1a1a1a;">00</div>
<div class="a" style="left:21.0px;top:588.0px;width:21.0px;height:15.0px;background:#808080;border-top:1px solid #fff;"></div>
<div class="a" style="left:21.0px;top:603.0px;width:21.0px;height:1.5px;background:#000;"></div>
<div class="t" style="left:22.5px;top:590.6px;font:15px/1 'Liberation Mono',monospace;color:#111;">90</div>
<div class="t" style="left:46.0px;top:590.6px;font:15px/1 'Liberation Mono',monospace;color:#1a1a1a;">00</div>
<div class="t" style="left:69.0px;top:590.6px;font:15px/1 'Liberation Mono',monospace;color:#1a1a1a;">00</div>
<div class="t" style="left:92.0px;top:590.6px;font:15px/1 'Liberation Mono',monospace;color:#1a1a1a;">00</div>
<div class="t" style="left:115.0px;top:590.6px;font:15px/1 'Liberation Mono',monospace;color:#1a1a1a;">00</div>
<div class="t" style="left:138.0px;top:590.6px;font:15px/1 'Liberation Mono',monospace;color:#1a1a1a;">00</div>
<div class="t" style="left:161.0px;top:590.6px;font:15px/1 'Liberation Mono',monospace;color:#1a1a1a;">00</div>
<div class="t" style="left:184.0px;top:590.6px;font:15px/1 'Liberation Mono',monospace;color:#1a1a1a;">00</div>
<div class="t" style="left:207.0px;top:590.6px;font:15px/1 'Liberation Mono',monospace;color:#1a1a1a;">00</div>
<div class="a" style="left:21.0px;top:605.0px;width:21.0px;height:15.0px;background:#808080;border-top:1px solid #fff;"></div>
<div class="a" style="left:21.0px;top:620.0px;width:21.0px;height:1.5px;background:#000;"></div>
<div class="t" style="left:22.5px;top:607.6px;font:15px/1 'Liberation Mono',monospace;color:#111;">98</div>
<div class="t" style="left:46.0px;top:607.6px;font:15px/1 'Liberation Mono',monospace;color:#1a1a1a;">00</div>
<div class="t" style="left:69.0px;top:607.6px;font:15px/1 'Liberation Mono',monospace;color:#1a1a1a;">00</div>
<div class="t" style="left:92.0px;top:607.6px;font:15px/1 'Liberation Mono',monospace;color:#1a1a1a;">00</div>
<div class="t" style="left:115.0px;top:607.6px;font:15px/1 'Liberation Mono',monospace;color:#1a1a1a;">00</div>
<div class="t" style="left:138.0px;top:607.6px;font:15px/1 'Liberation Mono',monospace;color:#1a1a1a;">00</div>
<div class="t" style="left:161.0px;top:607.6px;font:15px/1 'Liberation Mono',monospace;color:#1a1a1a;">00</div>
<div class="t" style="left:184.0px;top:607.6px;font:15px/1 'Liberation Mono',monospace;color:#1a1a1a;">00</div>
<div class="t" style="left:207.0px;top:607.6px;font:15px/1 'Liberation Mono',monospace;color:#1a1a1a;">00</div>
<div class="a" style="left:21.0px;top:622.0px;width:21.0px;height:15.0px;background:#808080;border-top:1px solid #fff;"></div>
<div class="a" style="left:21.0px;top:637.0px;width:21.0px;height:1.5px;background:#000;"></div>
<div class="t" style="left:22.5px;top:624.6px;font:15px/1 'Liberation Mono',monospace;color:#111;">A0</div>
<div class="t" style="left:46.0px;top:624.6px;font:15px/1 'Liberation Mono',monospace;color:#1a1a1a;">00</div>
<div class="t" style="left:69.0px;top:624.6px;font:15px/1 'Liberation Mono',monospace;color:#1a1a1a;">00</div>
<div class="t" style="left:92.0px;top:624.6px;font:15px/1 'Liberation Mono',monospace;color:#1a1a1a;">00</div>
<div class="t" style="left:115.0px;top:624.6px;font:15px/1 'Liberation Mono',monospace;color:#1a1a1a;">00</div>
<div class="t" style="left:138.0px;top:624.6px;font:15px/1 'Liberation Mono',monospace;color:#1a1a1a;">00</div>
<div class="t" style="left:161.0px;top:624.6px;font:15px/1 'Liberation Mono',monospace;color:#1a1a1a;">00</div>
<div class="t" style="left:184.0px;top:624.6px;font:15px/1 'Liberation Mono',monospace;color:#1a1a1a;">00</div>
<div class="t" style="left:207.0px;top:624.6px;font:15px/1 'Liberation Mono',monospace;color:#1a1a1a;">00</div>
<div class="a" style="left:21.0px;top:639.0px;width:21.0px;height:15.0px;background:#808080;border-top:1px solid #fff;"></div>
<div class="a" style="left:21.0px;top:654.0px;width:21.0px;height:1.5px;background:#000;"></div>
<div class="t" style="left:22.5px;top:641.6px;font:15px/1 'Liberation Mono',monospace;color:#111;">A8</div>
<div class="t" style="left:46.0px;top:641.6px;font:15px/1 'Liberation Mono',monospace;color:#1a1a1a;">00</div>
<div class="t" style="left:69.0px;top:641.6px;font:15px/1 'Liberation Mono',monospace;color:#1a1a1a;">00</div>
<div class="t" style="left:92.0px;top:641.6px;font:15px/1 'Liberation Mono',monospace;color:#1a1a1a;">00</div>
<div class="t" style="left:115.0px;top:641.6px;font:15px/1 'Liberation Mono',monospace;color:#1a1a1a;">00</div>
<div class="t" style="left:138.0px;top:641.6px;font:15px/1 'Liberation Mono',monospace;color:#1a1a1a;">00</div>
<div class="t" style="left:161.0px;top:641.6px;font:15px/1 'Liberation Mono',monospace;color:#1a1a1a;">00</div>
<div class="t" style="left:184.0px;top:641.6px;font:15px/1 'Liberation Mono',monospace;color:#1a1a1a;">00</div>
<div class="t" style="left:207.0px;top:641.6px;font:15px/1 'Liberation Mono',monospace;color:#1a1a1a;">00</div>
<div class="a" style="left:21.0px;top:656.0px;width:21.0px;height:15.0px;background:#808080;border-top:1px solid #fff;"></div>
<div class="a" style="left:21.0px;top:671.0px;width:21.0px;height:1.5px;background:#000;"></div>
<div class="t" style="left:22.5px;top:658.6px;font:15px/1 'Liberation Mono',monospace;color:#111;">B0</div>
<div class="t" style="left:46.0px;top:658.6px;font:15px/1 'Liberation Mono',monospace;color:#1a1a1a;">00</div>
<div class="t" style="left:69.0px;top:658.6px;font:15px/1 'Liberation Mono',monospace;color:#1a1a1a;">00</div>
<div class="t" style="left:92.0px;top:658.6px;font:15px/1 'Liberation Mono',monospace;color:#1a1a1a;">00</div>
<div class="t" style="left:115.0px;top:658.6px;font:15px/1 'Liberation Mono',monospace;color:#1a1a1a;">00</div>
<div class="t" style="left:138.0px;top:658.6px;font:15px/1 'Liberation Mono',monospace;color:#1a1a1a;">00</div>
<div class="t" style="left:161.0px;top:658.6px;font:15px/1 'Liberation Mono',monospace;color:#1a1a1a;">00</div>
<div class="t" style="left:184.0px;top:658.6px;font:15px/1 'Liberation Mono',monospace;color:#1a1a1a;">00</div>
<div class="t" style="left:207.0px;top:658.6px;font:15px/1 'Liberation Mono',monospace;color:#1a1a1a;">00</div>
<div class="a" style="left:21.0px;top:673.0px;width:21.0px;height:15.0px;background:#808080;border-top:1px solid #fff;"></div>
<div class="a" style="left:21.0px;top:688.0px;width:21.0px;height:1.5px;background:#000;"></div>
<div class="t" style="left:22.5px;top:675.6px;font:15px/1 'Liberation Mono',monospace;color:#111;">B8</div>
<div class="t" style="left:46.0px;top:675.6px;font:15px/1 'Liberation Mono',monospace;color:#1a1a1a;">00</div>
<div class="t" style="left:69.0px;top:675.6px;font:15px/1 'Liberation Mono',monospace;color:#1a1a1a;">00</div>
<div class="t" style="left:92.0px;top:675.6px;font:15px/1 'Liberation Mono',monospace;color:#1a1a1a;">00</div>
<div class="t" style="left:115.0px;top:675.6px;font:15px/1 'Liberation Mono',monospace;color:#1a1a1a;">00</div>
<div class="t" style="left:138.0px;top:675.6px;font:15px/1 'Liberation Mono',monospace;color:#1a1a1a;">00</div>
<div class="t" style="left:161.0px;top:675.6px;font:15px/1 'Liberation Mono',monospace;color:#1a1a1a;">00</div>
<div class="t" style="left:184.0px;top:675.6px;font:15px/1 'Liberation Mono',monospace;color:#1a1a1a;">00</div>
<div class="t" style="left:207.0px;top:675.6px;font:15px/1 'Liberation Mono',monospace;color:#1a1a1a;">00</div>
<div class="a" style="left:21.0px;top:690.0px;width:21.0px;height:15.0px;background:#808080;border-top:1px solid #fff;"></div>
<div class="a" style="left:21.0px;top:705.0px;width:21.0px;height:1.5px;background:#000;"></div>
<div class="t" style="left:22.5px;top:692.6px;font:15px/1 'Liberation Mono',monospace;color:#111;">C0</div>
<div class="t" style="left:46.0px;top:692.6px;font:15px/1 'Liberation Mono',monospace;color:#1a1a1a;">00</div>
<div class="t" style="left:69.0px;top:692.6px;font:15px/1 'Liberation Mono',monospace;color:#1a1a1a;">00</div>
<div class="t" style="left:92.0px;top:692.6px;font:15px/1 'Liberation Mono',monospace;color:#1a1a1a;">00</div>
<div class="t" style="left:115.0px;top:692.6px;font:15px/1 'Liberation Mono',monospace;color:#1a1a1a;">00</div>
<div class="t" style="left:138.0px;top:692.6px;font:15px/1 'Liberation Mono',monospace;color:#1a1a1a;">00</div>
<div class="t" style="left:161.0px;top:692.6px;font:15px/1 'Liberation Mono',monospace;color:#1a1a1a;">00</div>
<div class="t" style="left:184.0px;top:692.6px;font:15px/1 'Liberation Mono',monospace;color:#1a1a1a;">00</div>
<div class="t" style="left:207.0px;top:692.6px;font:15px/1 'Liberation Mono',monospace;color:#1a1a1a;">00</div>
<div class="a" style="left:21.0px;top:707.0px;width:21.0px;height:15.0px;background:#808080;border-top:1px solid #fff;"></div>
<div class="a" style="left:21.0px;top:722.0px;width:21.0px;height:1.5px;background:#000;"></div>
<div class="t" style="left:22.5px;top:709.6px;font:15px/1 'Liberation Mono',monospace;color:#111;">C8</div>
<div class="t" style="left:46.0px;top:709.6px;font:15px/1 'Liberation Mono',monospace;color:#1a1a1a;">00</div>
<div class="t" style="left:69.0px;top:709.6px;font:15px/1 'Liberation Mono',monospace;color:#1a1a1a;">00</div>
<div class="t" style="left:92.0px;top:709.6px;font:15px/1 'Liberation Mono',monospace;color:#1a1a1a;">00</div>
<div class="t" style="left:115.0px;top:709.6px;font:15px/1 'Liberation Mono',monospace;color:#1a1a1a;">00</div>
<div class="t" style="left:138.0px;top:709.6px;font:15px/1 'Liberation Mono',monospace;color:#1a1a1a;">00</div>
<div class="t" style="left:161.0px;top:709.6px;font:15px/1 'Liberation Mono',monospace;color:#1a1a1a;">00</div>
<div class="t" style="left:184.0px;top:709.6px;font:15px/1 'Liberation Mono',monospace;color:#1a1a1a;">00</div>
<div class="t" style="left:207.0px;top:709.6px;font:15px/1 'Liberation Mono',monospace;color:#1a1a1a;">00</div>
<div class="a" style="left:21.0px;top:724.0px;width:21.0px;height:15.0px;background:#808080;border-top:1px solid #fff;"></div>
<div class="a" style="left:21.0px;top:739.0px;width:21.0px;height:1.5px;background:#000;"></div>
<div class="t" style="left:22.5px;top:726.6px;font:15px/1 'Liberation Mono',monospace;color:#111;">D0</div>
<div class="t" style="left:46.0px;top:726.6px;font:15px/1 'Liberation Mono',monospace;color:#1a1a1a;">00</div>
<div class="t" style="left:69.0px;top:726.6px;font:15px/1 'Liberation Mono',monospace;color:#1a1a1a;">00</div>
<div class="t" style="left:92.0px;top:726.6px;font:15px/1 'Liberation Mono',monospace;color:#1a1a1a;">00</div>
<div class="t" style="left:115.0px;top:726.6px;font:15px/1 'Liberation Mono',monospace;color:#1a1a1a;">00</div>
<div class="t" style="left:138.0px;top:726.6px;font:15px/1 'Liberation Mono',monospace;color:#1a1a1a;">00</div>
<div class="t" style="left:161.0px;top:726.6px;font:15px/1 'Liberation Mono',monospace;color:#1a1a1a;">00</div>
<div class="t" style="left:184.0px;top:726.6px;font:15px/1 'Liberation Mono',monospace;color:#1a1a1a;">00</div>
<div class="t" style="left:207.0px;top:726.6px;font:15px/1 'Liberation Mono',monospace;color:#1a1a1a;">00</div>
<div class="a" style="left:21.0px;top:741.0px;width:21.0px;height:15.0px;background:#808080;border-top:1px solid #fff;"></div>
<div class="a" style="left:21.0px;top:756.0px;width:21.0px;height:1.5px;background:#000;"></div>
<div class="t" style="left:22.5px;top:743.6px;font:15px/1 'Liberation Mono',monospace;color:#111;">D8</div>
<div class="t" style="left:46.0px;top:743.6px;font:15px/1 'Liberation Mono',monospace;color:#1a1a1a;">00</div>
<div class="t" style="left:69.0px;top:743.6px;font:15px/1 'Liberation Mono',monospace;color:#1a1a1a;">00</div>
<div class="t" style="left:92.0px;top:743.6px;font:15px/1 'Liberation Mono',monospace;color:#1a1a1a;">00</div>
<div class="t" style="left:115.0px;top:743.6px;font:15px/1 'Liberation Mono',monospace;color:#1a1a1a;">00</div>
<div class="t" style="left:138.0px;top:743.6px;font:15px/1 'Liberation Mono',monospace;color:#1a1a1a;">00</div>
<div class="t" style="left:161.0px;top:743.6px;font:15px/1 'Liberation Mono',monospace;color:#1a1a1a;">00</div>
<div class="t" style="left:184.0px;top:743.6px;font:15px/1 'Liberation Mono',monospace;color:#1a1a1a;">00</div>
<div class="t" style="left:207.0px;top:743.6px;font:15px/1 'Liberation Mono',monospace;color:#1a1a1a;">00</div>
<div class="a" style="left:21.0px;top:758.0px;width:21.0px;height:15.0px;background:#808080;border-top:1px solid #fff;"></div>
<div class="a" style="left:21.0px;top:773.0px;width:21.0px;height:1.5px;background:#000;"></div>
<div class="t" style="left:22.5px;top:760.6px;font:15px/1 'Liberation Mono',monospace;color:#111;">E0</div>
<div class="t" style="left:46.0px;top:760.6px;font:15px/1 'Liberation Mono',monospace;color:#1a1a1a;">00</div>
<div class="t" style="left:69.0px;top:760.6px;font:15px/1 'Liberation Mono',monospace;color:#1a1a1a;">00</div>
<div class="t" style="left:92.0px;top:760.6px;font:15px/1 'Liberation Mono',monospace;color:#1a1a1a;">00</div>
<div class="t" style="left:115.0px;top:760.6px;font:15px/1 'Liberation Mono',monospace;color:#1a1a1a;">00</div>
<div class="t" style="left:138.0px;top:760.6px;font:15px/1 'Liberation Mono',monospace;color:#1a1a1a;">00</div>
<div class="t" style="left:161.0px;top:760.6px;font:15px/1 'Liberation Mono',monospace;color:#1a1a1a;">00</div>
<div class="t" style="left:184.0px;top:760.6px;font:15px/1 'Liberation Mono',monospace;color:#1a1a1a;">00</div>
<div class="t" style="left:207.0px;top:760.6px;font:15px/1 'Liberation Mono',monospace;color:#1a1a1a;">00</div>
<div class="a" style="left:21.0px;top:775.0px;width:21.0px;height:15.0px;background:#808080;border-top:1px solid #fff;"></div>
<div class="a" style="left:21.0px;top:790.0px;width:21.0px;height:1.5px;background:#000;"></div>
<div class="t" style="left:22.5px;top:777.6px;font:15px/1 'Liberation Mono',monospace;color:#111;">E8</div>
<div class="t" style="left:46.0px;top:777.6px;font:15px/1 'Liberation Mono',monospace;color:#1a1a1a;">00</div>
<div class="t" style="left:69.0px;top:777.6px;font:15px/1 'Liberation Mono',monospace;color:#1a1a1a;">00</div>
<div class="t" style="left:92.0px;top:777.6px;font:15px/1 'Liberation Mono',monospace;color:#1a1a1a;">00</div>
<div class="t" style="left:115.0px;top:777.6px;font:15px/1 'Liberation Mono',monospace;color:#1a1a1a;">00</div>
<div class="t" style="left:138.0px;top:777.6px;font:15px/1 'Liberation Mono',monospace;color:#1a1a1a;">00</div>
<div class="t" style="left:161.0px;top:777.6px;font:15px/1 'Liberation Mono',monospace;color:#1a1a1a;">00</div>
<div class="t" style="left:184.0px;top:777.6px;font:15px/1 'Liberation Mono',monospace;color:#1a1a1a;">00</div>
<div class="t" style="left:207.0px;top:777.6px;font:15px/1 'Liberation Mono',monospace;color:#1a1a1a;">00</div>
<div class="a" style="left:21.0px;top:792.0px;width:21.0px;height:15.0px;background:#808080;border-top:1px solid #fff;"></div>
<div class="a" style="left:21.0px;top:807.0px;width:21.0px;height:1.5px;background:#000;"></div>
<div class="t" style="left:22.5px;top:794.6px;font:15px/1 'Liberation Mono',monospace;color:#111;">F0</div>
<div class="t" style="left:46.0px;top:794.6px;font:15px/1 'Liberation Mono',monospace;color:#1a1a1a;">00</div>
<div class="t" style="left:69.0px;top:794.6px;font:15px/1 'Liberation Mono',monospace;color:#1a1a1a;">00</div>
<div class="t" style="left:92.0px;top:794.6px;font:15px/1 'Liberation Mono',monospace;color:#1a1a1a;">00</div>
<div class="t" style="left:115.0px;top:794.6px;font:15px/1 'Liberation Mono',monospace;color:#1a1a1a;">00</div>
<div class="t" style="left:138.0px;top:794.6px;font:15px/1 'Liberation Mono',monospace;color:#1a1a1a;">00</div>
<div class="t" style="left:161.0px;top:794.6px;font:15px/1 'Liberation Mono',monospace;color:#1a1a1a;">00</div>
<div class="t" style="left:184.0px;top:794.6px;font:15px/1 'Liberation Mono',monospace;color:#1a1a1a;">00</div>
<div class="t" style="left:207.0px;top:794.6px;font:15px/1 'Liberation Mono',monospace;color:#1a1a1a;">00</div>
<div class="a" style="left:21.0px;top:809.0px;width:21.0px;height:15.0px;background:#808080;border-top:1px solid #fff;"></div>
<div class="a" style="left:21.0px;top:824.0px;width:21.0px;height:1.5px;background:#000;"></div>
<div class="t" style="left:22.5px;top:811.6px;font:15px/1 'Liberation Mono',monospace;color:#111;">F8</div>
<div class="t" style="left:46.0px;top:811.6px;font:15px/1 'Liberation Mono',monospace;color:#1a1a1a;">00</div>
<div class="t" style="left:69.0px;top:811.6px;font:15px/1 'Liberation Mono',monospace;color:#1a1a1a;">00</div>
<div class="t" style="left:92.0px;top:811.6px;font:15px/1 'Liberation Mono',monospace;color:#1a1a1a;">00</div>
<div class="t" style="left:115.0px;top:811.6px;font:15px/1 'Liberation Mono',monospace;color:#1a1a1a;">00</div>
<div class="t" style="left:138.0px;top:811.6px;font:15px/1 'Liberation Mono',monospace;color:#1a1a1a;">00</div>
<div class="t" style="left:161.0px;top:811.6px;font:15px/1 'Liberation Mono',monospace;color:#1a1a1a;">00</div>
<div class="t" style="left:184.0px;top:811.6px;font:15px/1 'Liberation Mono',monospace;color:#1a1a1a;">00</div>
<div class="t" style="left:207.0px;top:811.6px;font:15px/1 'Liberation Mono',monospace;color:#1a1a1a;">00</div>
<div class="a" style="left:42.0px;top:281.0px;width:1.0px;height:544.0px;background:#000;"></div>
<div class="a" style="left:65.0px;top:281.0px;width:1.0px;height:544.0px;background:#c8c8c8;"></div>
<div class="a" style="left:88.0px;top:281.0px;width:1.0px;height:544.0px;background:#c8c8c8;"></div>
<div class="a" style="left:111.0px;top:281.0px;width:1.0px;height:544.0px;background:#c8c8c8;"></div>
<div class="a" style="left:134.0px;top:281.0px;width:1.0px;height:544.0px;background:#c8c8c8;"></div>
<div class="a" style="left:157.0px;top:281.0px;width:1.0px;height:544.0px;background:#c8c8c8;"></div>
<div class="a" style="left:180.0px;top:281.0px;width:1.0px;height:544.0px;background:#c8c8c8;"></div>
<div class="a" style="left:203.0px;top:281.0px;width:1.0px;height:544.0px;background:#c8c8c8;"></div>
<div class="a" style="left:226.0px;top:281.0px;width:1.0px;height:544.0px;background:#c8c8c8;"></div>
<div class="a" style="left:43.0px;top:297.0px;width:183.0px;height:1.0px;background:#c8c8c8;"></div>
<div class="a" style="left:43.0px;top:314.0px;width:183.0px;height:1.0px;background:#c8c8c8;"></div>
<div class="a" style="left:43.0px;top:331.0px;width:183.0px;height:1.0px;background:#c8c8c8;"></div>
<div class="a" style="left:43.0px;top:348.0px;width:183.0px;height:1.0px;background:#c8c8c8;"></div>
<div class="a" style="left:43.0px;top:365.0px;width:183.0px;height:1.0px;background:#c8c8c8;"></div>
<div class="a" style="left:43.0px;top:382.0px;width:183.0px;height:1.0px;background:#c8c8c8;"></div>
<div class="a" style="left:43.0px;top:399.0px;width:183.0px;height:1.0px;background:#c8c8c8;"></div>
<div class="a" style="left:43.0px;top:416.0px;width:183.0px;height:1.0px;background:#c8c8c8;"></div>
<div class="a" style="left:43.0px;top:433.0px;width:183.0px;height:1.0px;background:#c8c8c8;"></div>
<div class="a" style="left:43.0px;top:450.0px;width:183.0px;height:1.0px;background:#c8c8c8;"></div>
<div class="a" style="left:43.0px;top:467.0px;width:183.0px;height:1.0px;background:#c8c8c8;"></div>
<div class="a" style="left:43.0px;top:484.0px;width:183.0px;height:1.0px;background:#c8c8c8;"></div>
<div class="a" style="left:43.0px;top:501.0px;width:183.0px;height:1.0px;background:#c8c8c8;"></div>
<div class="a" style="left:43.0px;top:518.0px;width:183.0px;height:1.0px;background:#c8c8c8;"></div>
<div class="a" style="left:43.0px;top:535.0px;width:183.0px;height:1.0px;background:#c8c8c8;"></div>
<div class="a" style="left:43.0px;top:552.0px;width:183.0px;height:1.0px;background:#c8c8c8;"></div>
<div class="a" style="left:43.0px;top:569.0px;width:183.0px;height:1.0px;background:#c8c8c8;"></div>
<div class="a" style="left:43.0px;top:586.0px;width:183.0px;height:1.0px;background:#c8c8c8;"></div>
<div class="a" style="left:43.0px;top:603.0px;width:183.0px;height:1.0px;background:#c8c8c8;"></div>
<div class="a" style="left:43.0px;top:620.0px;width:183.0px;height:1.0px;background:#c8c8c8;"></div>
<div class="a" style="left:43.0px;top:637.0px;width:183.0px;height:1.0px;background:#c8c8c8;"></div>
<div class="a" style="left:43.0px;top:654.0px;width:183.0px;height:1.0px;background:#c8c8c8;"></div>
<div class="a" style="left:43.0px;top:671.0px;width:183.0px;height:1.0px;background:#c8c8c8;"></div>
<div class="a" style="left:43.0px;top:688.0px;width:183.0px;height:1.0px;background:#c8c8c8;"></div>
<div class="a" style="left:43.0px;top:705.0px;width:183.0px;height:1.0px;background:#c8c8c8;"></div>
<div class="a" style="left:43.0px;top:722.0px;width:183.0px;height:1.0px;background:#c8c8c8;"></div>
<div class="a" style="left:43.0px;top:739.0px;width:183.0px;height:1.0px;background:#c8c8c8;"></div>
<div class="a" style="left:43.0px;top:756.0px;width:183.0px;height:1.0px;background:#c8c8c8;"></div>
<div class="a" style="left:43.0px;top:773.0px;width:183.0px;height:1.0px;background:#c8c8c8;"></div>
<div class="a" style="left:43.0px;top:790.0px;width:183.0px;height:1.0px;background:#c8c8c8;"></div>
<div class="a" style="left:43.0px;top:807.0px;width:183.0px;height:1.0px;background:#c8c8c8;"></div>
<div class="a" style="left:43.0px;top:824.0px;width:183.0px;height:1.0px;background:#c8c8c8;"></div>
<div class="a" style="left:336.0px;top:76.0px;width:974.0px;height:1478.0px;background:#808080;border-top:2px solid #fff;border-left:2px solid #fff;border-right:2px solid #3c3c3c;border-bottom:2px solid #3c3c3c;"></div>
<div class="a" style="left:338.0px;top:78.0px;width:970.0px;height:25.0px;background:#696969;"></div>
<div class="t" style="left:347.5px;top:84.0px;font:13px/1 'Liberation Sans',sans-serif;font-weight:700;color:#ededed;">Asset Information</div>
<div class="a" style="left:341.0px;top:110.0px;width:965.0px;height:1441.0px;background:#fff;"></div>
<div class="a" style="left:341.0px;top:110.0px;width:944.0px;height:1419.0px;overflow:hidden;"><div class="t" style="left:3.8px;top:4.4px;font:15px/1 'Liberation Mono',monospace;color:#1a1a1a;">Monitor</div><div class="t" style="left:3.8px;top:21.4px;font:15px/1 'Liberation Mono',monospace;color:#1a1a1a;">  Model name............... LG TV SSCR</div><div class="t" style="left:3.8px;top:38.4px;font:15px/1 'Liberation Mono',monospace;color:#1a1a1a;">  Windows description...... Generic PnP Monitor</div><div class="t" style="left:3.8px;top:55.4px;font:15px/1 'Liberation Mono',monospace;color:#1a1a1a;">  Manufacturer............. LGE</div><div class="t" style="left:3.8px;top:72.4px;font:15px/1 'Liberation Mono',monospace;color:#1a1a1a;">  Plug and Play ID......... GSMC0C8</div><div class="t" style="left:3.8px;top:89.4px;font:15px/1 'Liberation Mono',monospace;color:#1a1a1a;">  Serial number............ n/a</div><div class="t" style="left:3.8px;top:106.4px;font:15px/1 'Liberation Mono',monospace;color:#1a1a1a;">  Manufacture date......... 2020, ISO week 1</div><div class="t" style="left:3.8px;top:123.4px;font:15px/1 'Liberation Mono',monospace;color:#1a1a1a;">  Filter driver............ None</div><div class="t" style="left:3.8px;top:140.4px;font:15px/1 'Liberation Mono',monospace;color:#1a1a1a;">  -------------------------</div><div class="t" style="left:3.8px;top:157.4px;font:15px/1 'Liberation Mono',monospace;color:#1a1a1a;">  EDID revision............ 1.3</div><div class="t" style="left:3.8px;top:174.4px;font:15px/1 'Liberation Mono',monospace;color:#1a1a1a;">  Input signal type........ Digital</div><div class="t" style="left:3.8px;top:191.4px;font:15px/1 'Liberation Mono',monospace;color:#1a1a1a;">  Color bit depth.......... Undefined</div><div class="t" style="left:3.8px;top:208.4px;font:15px/1 'Liberation Mono',monospace;color:#1a1a1a;">  Display type............. RGB color</div><div class="t" style="left:3.8px;top:225.4px;font:15px/1 'Liberation Mono',monospace;color:#1a1a1a;">  Screen size.............. 1600 x 900 mm (72,3 in)</div><div class="t" style="left:3.8px;top:242.4px;font:15px/1 'Liberation Mono',monospace;color:#1a1a1a;">  Power management......... Not supported</div><div class="t" style="left:3.8px;top:259.4px;font:15px/1 'Liberation Mono',monospace;color:#1a1a1a;">  Extension blocs.......... 1 (Unknown type)</div><div class="t" style="left:3.8px;top:276.4px;font:15px/1 'Liberation Mono',monospace;color:#1a1a1a;">  -------------------------</div><div class="t" style="left:3.8px;top:293.4px;font:15px/1 'Liberation Mono',monospace;color:#1a1a1a;">  DDC/CI................... n/a</div><div class="t" style="left:3.8px;top:327.4px;font:15px/1 'Liberation Mono',monospace;color:#1a1a1a;">Color characteristics</div><div class="t" style="left:3.8px;top:344.4px;font:15px/1 'Liberation Mono',monospace;color:#1a1a1a;">  Default color space...... Non-sRGB</div><div class="t" style="left:3.8px;top:361.4px;font:15px/1 'Liberation Mono',monospace;color:#1a1a1a;">  Display gamma............ 2,20</div><div class="t" style="left:3.8px;top:378.4px;font:15px/1 'Liberation Mono',monospace;color:#1a1a1a;">  Red chromaticity......... Rx 0,640 - Ry 0,330</div><div class="t" style="left:3.8px;top:395.4px;font:15px/1 'Liberation Mono',monospace;color:#1a1a1a;">  Green chromaticity....... Gx 0,300 - Gy 0,600</div><div class="t" style="left:3.8px;top:412.4px;font:15px/1 'Liberation Mono',monospace;color:#1a1a1a;">  Blue chromaticity........ Bx 0,150 - By 0,060</div><div class="t" style="left:3.8px;top:429.4px;font:15px/1 'Liberation Mono',monospace;color:#1a1a1a;">  White point (default).... Wx 0,313 - Wy 0,329</div><div class="t" style="left:3.8px;top:446.4px;font:15px/1 'Liberation Mono',monospace;color:#1a1a1a;">  Additional descriptors... None</div><div class="t" style="left:3.8px;top:480.4px;font:15px/1 'Liberation Mono',monospace;color:#1a1a1a;">Timing characteristics</div><div class="t" style="left:3.8px;top:497.4px;font:15px/1 'Liberation Mono',monospace;color:#1a1a1a;">  Horizontal scan range.... 30-255kHz</div><div class="t" style="left:3.8px;top:514.4px;font:15px/1 'Liberation Mono',monospace;color:#1a1a1a;">  Vertical scan range...... 24-120Hz</div><div class="t" style="left:3.8px;top:531.4px;font:15px/1 'Liberation Mono',monospace;color:#1a1a1a;">  Video bandwidth.......... 1190MHz</div><div class="t" style="left:3.8px;top:548.4px;font:15px/1 'Liberation Mono',monospace;color:#1a1a1a;">  CVT standard............. Not supported</div><div class="t" style="left:3.8px;top:565.4px;font:15px/1 'Liberation Mono',monospace;color:#1a1a1a;">  GTF standard............. Not supported</div><div class="t" style="left:3.8px;top:582.4px;font:15px/1 'Liberation Mono',monospace;color:#1a1a1a;">  Additional descriptors... None</div><div class="t" style="left:3.8px;top:599.4px;font:15px/1 'Liberation Mono',monospace;color:#1a1a1a;">  Preferred timing......... Yes</div><div class="t" style="left:3.8px;top:616.4px;font:15px/1 'Liberation Mono',monospace;color:#1a1a1a;">  Native/preferred timing.. 3840x2160p at 60Hz (16:9)</div><div class="t" style="left:3.8px;top:633.4px;font:15px/1 'Liberation Mono',monospace;color:#1a1a1a;">    Modeline............... "3840x2160" 594,000 3840 4016 4104 4400 2160 2168 2178 2250 +hsync +vsync</div><div class="t" style="left:3.8px;top:650.4px;font:15px/1 'Liberation Mono',monospace;color:#1a1a1a;">  Detailed timing #1....... 1360x768p at 60Hz (16:9)</div><div class="t" style="left:3.8px;top:667.4px;font:15px/1 'Liberation Mono',monospace;color:#1a1a1a;">    Modeline............... "1360x768" 85,500 1360 1424 1536 1792 768 771 777 795 +hsync +vsync</div><div class="t" style="left:3.8px;top:701.4px;font:15px/1 'Liberation Mono',monospace;color:#1a1a1a;">Standard timings supported</div><div class="t" style="left:3.8px;top:718.4px;font:15px/1 'Liberation Mono',monospace;color:#1a1a1a;">     720 x  400p at  70Hz - IBM VGA</div><div class="t" style="left:3.8px;top:735.4px;font:15px/1 'Liberation Mono',monospace;color:#1a1a1a;">     640 x  480p at  60Hz - IBM VGA</div><div class="t" style="left:3.8px;top:752.4px;font:15px/1 'Liberation Mono',monospace;color:#1a1a1a;">     800 x  600p at  60Hz - VESA</div><div class="t" style="left:3.8px;top:769.4px;font:15px/1 'Liberation Mono',monospace;color:#1a1a1a;">    1024 x  768p at  60Hz - VESA</div><div class="t" style="left:3.8px;top:786.4px;font:15px/1 'Liberation Mono',monospace;color:#1a1a1a;">     640 x  480p at  60Hz - VESA STD</div><div class="t" style="left:3.8px;top:803.4px;font:15px/1 'Liberation Mono',monospace;color:#1a1a1a;">     800 x  600p at  60Hz - VESA STD</div><div class="t" style="left:3.8px;top:820.4px;font:15px/1 'Liberation Mono',monospace;color:#1a1a1a;">    1024 x  768p at  60Hz - VESA STD</div><div class="t" style="left:3.8px;top:837.4px;font:15px/1 'Liberation Mono',monospace;color:#1a1a1a;">    1152 x  864p at  60Hz - VESA STD</div><div class="t" style="left:3.8px;top:854.4px;font:15px/1 'Liberation Mono',monospace;color:#1a1a1a;">    1280 x 1024p at  60Hz - VESA STD</div><div class="t" style="left:3.8px;top:871.4px;font:15px/1 'Liberation Mono',monospace;color:#1a1a1a;">    1920 x 1080p at  60Hz - VESA STD</div><div class="t" style="left:3.8px;top:905.4px;font:15px/1 'Liberation Mono',monospace;color:#1a1a1a;">Report information</div><div class="t" style="left:3.8px;top:922.4px;font:15px/1 'Liberation Mono',monospace;color:#1a1a1a;">  Date generated........... 28.11.2020</div><div class="t" style="left:3.8px;top:939.4px;font:15px/1 'Liberation Mono',monospace;color:#1a1a1a;">  Software revision........ 2.91.0.1043</div><div class="t" style="left:3.8px;top:956.4px;font:15px/1 'Liberation Mono',monospace;color:#1a1a1a;">  Data source.............. Registry-Active</div><div class="t" style="left:3.8px;top:973.4px;font:15px/1 'Liberation Mono',monospace;color:#1a1a1a;">  Operating system......... 10.0.18363.2</div><div class="t" style="left:3.8px;top:1007.4px;font:15px/1 'Liberation Mono',monospace;color:#1a1a1a;">Raw data</div><div class="t" style="left:3.8px;top:1024.4px;font:15px/1 'Liberation Mono',monospace;color:#1a1a1a;">  00,FF,FF,FF,FF,FF,FF,00,1E,6D,C8,C0,01,01,01,01,01,1E,01,03,80,A0,5A,78,0A,EE,91,A3,54,4C,99,26,</div><div class="t" style="left:3.8px;top:1041.4px;font:15px/1 'Liberation Mono',monospace;color:#1a1a1a;">  0F,50,54,A1,08,00,31,40,45,40,61,40,71,40,81,80,D1,C0,01,01,01,01,08,E8,00,30,F2,70,5A,80,B0,58,</div><div class="t" style="left:3.8px;top:1058.4px;font:15px/1 'Liberation Mono',monospace;color:#1a1a1a;">  8A,00,40,84,63,00,00,1E,66,21,50,B0,51,00,1B,30,40,70,36,00,40,84,63,00,00,1E,00,00,00,FD,00,18,</div><div class="t" style="left:3.8px;top:1075.4px;font:15px/1 'Liberation Mono',monospace;color:#1a1a1a;">  78,1E,FF,77,00,0A,20,20,20,20,20,20,00,00,00,FC,00,4C,47,20,54,56,20,53,53,43,52,0A,20,20,01,AA</div></div>
<div class="a" style="left:1285.0px;top:111.0px;width:21.0px;height:1439.0px;background:#f0f0f0;"></div>
<div class="a" style="left:341.0px;top:1529.0px;width:965.0px;height:21.0px;background:#f0f0f0;"></div>
<svg class="a" style="left:1288.5px;top:115.0px;" width="14" height="14" viewBox="0 0 14 14"><path d="M-5,2.5 L0,-2.5 L5,2.5" transform="translate(7.0,7.0)" fill="none" stroke="#b4b4b4" stroke-width="1.8"/></svg>
<svg class="a" style="left:1288.5px;top:1510.0px;" width="14" height="14" viewBox="0 0 14 14"><path d="M-5,-2.5 L0,2.5 L5,-2.5" transform="translate(7.0,7.0)" fill="none" stroke="#b4b4b4" stroke-width="1.8"/></svg>
<svg class="a" style="left:345.5px;top:1532.5px;" width="14" height="14" viewBox="0 0 14 14"><path d="M2.5,-5 L-2.5,0 L2.5,5" transform="translate(7.0,7.0)" fill="none" stroke="#b4b4b4" stroke-width="1.8"/></svg>
<svg class="a" style="left:1266.5px;top:1532.5px;" width="14" height="14" viewBox="0 0 14 14"><path d="M-2.5,-5 L2.5,0 L-2.5,5" transform="translate(7.0,7.0)" fill="none" stroke="#b4b4b4" stroke-width="1.8"/></svg>
<div class="a" style="left:1328.0px;top:5.0px;width:645.5px;height:606.0px;background:#808080;"></div>
<div class="a" style="left:1328.0px;top:5.0px;width:645.5px;height:32.0px;background:#1b1b1b;"></div>
<div class="a" style="left:1328.0px;top:5.0px;width:1.0px;height:606.0px;background:#3a3a3a;"></div>
<div class="a" style="left:1972.5px;top:5.0px;width:1.0px;height:606.0px;background:#2e2e2e;"></div>
<div class="a" style="left:1328.0px;top:610.0px;width:645.5px;height:1.0px;background:#2e2e2e;"></div>
<svg class="a" style="left:1332.0px;top:14.0px;" width="21" height="17" viewBox="0 0 21 17"><rect x="1" y="0.5" width="19" height="13" fill="#0000f0" stroke="#000" stroke-width="1"/><path d="M2.8,5 V2.3 H5.5 M15.5,2.3 H18.2 V5 M2.8,9 V11.7 H5.5 M18.2,9 V11.7 H15.5" stroke="#fff" stroke-width="1.4" fill="none"/><rect x="9.5" y="14" width="2" height="1.2" fill="#000"/><rect x="6" y="15.2" width="9" height="1.2" fill="#000"/></svg>
<div class="t" style="left:1357.3px;top:14.2px;font:15px/1 'Liberation Sans',sans-serif;color:#9d9d9d;letter-spacing:-0.12px;">Custom Resolution Utility 1.4.2 by ToastyX</div>
<div class="a" style="left:1328.0px;top:5.0px;width:645.5px;height:1.0px;background:#3a3a3a;"></div>
<div class="a" style="left:1820.5px;top:20.0px;width:11.5px;height:1.0px;background:#9a9a9a;"></div>
<div class="a" style="left:1878.0px;top:15.5px;width:12.0px;height:11.5px;border:1px solid #3c3c3c;"></div>
<svg class="a" style="left:1937.0px;top:15.0px;" width="12" height="12" viewBox="0 0 12 12"><path d="M0.5,0.5 L11.5,11.5 M11.5,0.5 L0.5,11.5" stroke="#9a9a9a" stroke-width="1.1"/></svg>
<div class="a" style="left:1339.0px;top:48.0px;width:399.0px;height:24.0px;background:#e5e5e5;border:1px solid #cfcfcf;"></div>
<div class="t" style="left:1342.7px;top:53.5px;font:13.33px/1 'Liberation Sans',sans-serif;color:#000;">GSMC0C8 - LG TV SSCR (active)</div>
<svg class="a" style="left:1721.0px;top:56.0px;" width="12" height="8" viewBox="0 0 12 8"><path d="M1,2 L6,7 L11,2" stroke="#333" stroke-width="1.1" fill="none"/></svg>
<div class="a" style="left:1750.0px;top:48.0px;width:51.0px;height:23.0px;background:#e1e1e1;border:1px solid #adadad;"></div>
<div class="t" style="left:1750.0px;top:52.9px;width:51.0px;text-align:center;font:13.5px/1 'Liberation Sans',sans-serif;color:#000;">Edit...</div>
<div class="a" style="left:1804.0px;top:48.0px;width:51.0px;height:23.0px;background:#e1e1e1;border:1px solid #adadad;"></div>
<div class="t" style="left:1804.0px;top:52.9px;width:51.0px;text-align:center;font:13.5px/1 'Liberation Sans',sans-serif;color:#000;">Copy</div>
<div class="a" style="left:1857.0px;top:48.0px;width:51.0px;height:23.0px;background:#cccccc;border:1px solid #bfbfbf;"></div>
<div class="t" style="left:1857.0px;top:52.9px;width:51.0px;text-align:center;font:13.5px/1 'Liberation Sans',sans-serif;color:#838383;">Paste</div>
<div class="a" style="left:1911.0px;top:48.0px;width:51.0px;height:23.0px;background:#e1e1e1;border:1px solid #adadad;"></div>
<div class="t" style="left:1911.0px;top:52.9px;width:51.0px;text-align:center;font:13.5px/1 'Liberation Sans',sans-serif;color:#000;">Delete</div>
<div class="a" style="left:1339.0px;top:88.0px;width:182.0px;height:476.0px;border:1px solid #dcdcdc;"></div>
<div class="t" style="left:1347.0px;top:80.2px;padding:0 4px;background:#808080;font:13.5px/1.2 'Liberation Sans',sans-serif;color:#000;">Established resolutions</div>
<div class="t" style="left:1381.5px;top:107.1px;font:14px/1 'Liberation Sans',sans-serif;font-weight:700;color:#000;">640x480 (4:3)</div>
<div class="a" style="left:1350.0px;top:130.3px;width:16.0px;height:16.0px;background:#fff;border:1px solid #333;"></div>
<svg class="a" style="left:1350.0px;top:130.3px;" width="16" height="16" viewBox="0 0 16 16"><path d="M3.5,8.5 L6.5,11.5 L12.5,4.5" stroke="#222" stroke-width="1.4" fill="none"/></svg>
<div class="t" style="left:1370.0px;top:131.4px;font:14px/1 'Liberation Sans',sans-serif;color:#000;">640x480 @ 60 Hz</div>
<div class="a" style="left:1350.0px;top:155.3px;width:16.0px;height:16.0px;background:#fff;border:1px solid #333;"></div>
<div class="t" style="left:1370.0px;top:156.4px;font:14px/1 'Liberation Sans',sans-serif;color:#000;">640x480 @ 72 Hz</div>
<div class="a" style="left:1350.0px;top:180.3px;width:16.0px;height:16.0px;background:#fff;border:1px solid #333;"></div>
<div class="t" style="left:1370.0px;top:181.4px;font:14px/1 'Liberation Sans',sans-serif;color:#000;">640x480 @ 75 Hz</div>
<div class="t" style="left:1381.5px;top:222.6px;font:14px/1 'Liberation Sans',sans-serif;font-weight:700;color:#000;">800x600 (4:3)</div>
<div class="a" style="left:1350.0px;top:245.8px;width:16.0px;height:16.0px;background:#fff;border:1px solid #333;"></div>
<div class="t" style="left:1370.0px;top:246.9px;font:14px/1 'Liberation Sans',sans-serif;color:#000;">800x600 @ 56 Hz</div>
<div class="a" style="left:1350.0px;top:270.8px;width:16.0px;height:16.0px;background:#fff;border:1px solid #333;"></div>
<svg class="a" style="left:1350.0px;top:270.8px;" width="16" height="16" viewBox="0 0 16 16"><path d="M3.5,8.5 L6.5,11.5 L12.5,4.5" stroke="#222" stroke-width="1.4" fill="none"/></svg>
<div class="t" style="left:1370.0px;top:271.9px;font:14px/1 'Liberation Sans',sans-serif;color:#000;">800x600 @ 60 Hz</div>
<div class="a" style="left:1350.0px;top:295.8px;width:16.0px;height:16.0px;background:#fff;border:1px solid #333;"></div>
<div class="t" style="left:1370.0px;top:296.9px;font:14px/1 'Liberation Sans',sans-serif;color:#000;">800x600 @ 72 Hz</div>
<div class="a" style="left:1350.0px;top:320.8px;width:16.0px;height:16.0px;background:#fff;border:1px solid #333;"></div>
<div class="t" style="left:1370.0px;top:321.9px;font:14px/1 'Liberation Sans',sans-serif;color:#000;">800x600 @ 75 Hz</div>
<div class="t" style="left:1381.5px;top:362.5px;font:14px/1 'Liberation Sans',sans-serif;font-weight:700;color:#000;">1024x768 (4:3)</div>
<div class="a" style="left:1350.0px;top:385.7px;width:16.0px;height:16.0px;background:#fff;border:1px solid #333;"></div>
<svg class="a" style="left:1350.0px;top:385.7px;" width="16" height="16" viewBox="0 0 16 16"><path d="M3.5,8.5 L6.5,11.5 L12.5,4.5" stroke="#222" stroke-width="1.4" fill="none"/></svg>
<div class="t" style="left:1370.0px;top:386.8px;font:14px/1 'Liberation Sans',sans-serif;color:#000;">1024x768 @ 60 Hz</div>
<div class="a" style="left:1350.0px;top:410.7px;width:16.0px;height:16.0px;background:#fff;border:1px solid #333;"></div>
<div class="t" style="left:1370.0px;top:411.8px;font:14px/1 'Liberation Sans',sans-serif;color:#000;">1024x768 @ 70 Hz</div>
<div class="a" style="left:1350.0px;top:435.7px;width:16.0px;height:16.0px;background:#fff;border:1px solid #333;"></div>
<div class="t" style="left:1370.0px;top:436.8px;font:14px/1 'Liberation Sans',sans-serif;color:#000;">1024x768 @ 75 Hz</div>
<div class="t" style="left:1381.5px;top:477.3px;font:14px/1 'Liberation Sans',sans-serif;font-weight:700;color:#000;">1280x1024 (5:4)</div>
<div class="a" style="left:1350.0px;top:500.5px;width:16.0px;height:16.0px;background:#fff;border:1px solid #333;"></div>
<div class="t" style="left:1370.0px;top:501.6px;font:14px/1 'Liberation Sans',sans-serif;color:#000;">1280x1024 @ 75 Hz</div>
<div class="a" style="left:1350.0px;top:531.0px;width:51.5px;height:21.0px;background:#e1e1e1;border:1px solid #adadad;"></div>
<div class="t" style="left:1350.0px;top:534.9px;width:51.5px;text-align:center;font:13.5px/1 'Liberation Sans',sans-serif;color:#000;">All</div>
<div class="a" style="left:1404.4px;top:531.0px;width:51.2px;height:21.0px;background:#e1e1e1;border:1px solid #adadad;"></div>
<div class="t" style="left:1404.4px;top:534.9px;width:51.2px;text-align:center;font:13.5px/1 'Liberation Sans',sans-serif;color:#000;">None</div>
<div class="a" style="left:1458.0px;top:531.0px;width:52.0px;height:21.0px;background:#cccccc;border:1px solid #bfbfbf;"></div>
<div class="t" style="left:1458.0px;top:534.9px;width:52.0px;text-align:center;font:13.5px/1 'Liberation Sans',sans-serif;color:#838383;">Reset</div>
<div class="a" style="left:1531.0px;top:88.0px;width:432.0px;height:130.0px;border:1px solid #dcdcdc;"></div>
<div class="t" style="left:1539.0px;top:80.2px;padding:0 4px;background:#808080;font:13.5px/1.2 'Liberation Sans',sans-serif;color:#000;">Detailed resolutions (2 slots left)</div>
<div class="a" style="left:1543.0px;top:104.0px;width:409.0px;height:70.0px;background:#fff;border:1px solid #d0d0d0;"></div>
<div class="a" style="left:1544.0px;top:105.5px;width:406.0px;height:16.5px;background:#0078d7;"></div>
<div class="t" style="left:1546.8px;top:106.5px;font:14px/1 'Liberation Sans',sans-serif;color:#fff;">3840x2160 @ 60.000 Hz (594.00 MHz) [+/+]</div>
<div class="t" style="left:1546.8px;top:123.6px;font:14px/1 'Liberation Sans',sans-serif;color:#000;">1360x768 @ 60.015 Hz (85.50 MHz) [+/+]</div>
<div class="t" style="left:1546.8px;top:141.5px;font:13px/1 'Liberation Sans',sans-serif;color:#6d6d6d;">Name: LG TV SSCR</div>
<div class="a" style="left:1542.7px;top:185.5px;width:50.5px;height:22.5px;background:#e1e1e1;border:1px solid #adadad;"></div>
<div class="t" style="left:1542.7px;top:190.1px;width:50.5px;text-align:center;font:13.5px/1 'Liberation Sans',sans-serif;color:#000;">Add...</div>
<div class="a" style="left:1596.0px;top:185.5px;width:51.0px;height:22.5px;background:#e1e1e1;border:1px solid #adadad;"></div>
<div class="t" style="left:1596.0px;top:190.1px;width:51.0px;text-align:center;font:13.5px/1 'Liberation Sans',sans-serif;color:#000;">Edit...</div>
<div class="a" style="left:1650.0px;top:185.5px;width:51.0px;height:22.5px;background:#e1e1e1;border:1px solid #adadad;"></div>
<div class="t" style="left:1650.0px;top:190.1px;width:51.0px;text-align:center;font:13.5px/1 'Liberation Sans',sans-serif;color:#000;">Delete</div>
<div class="a" style="left:1704.0px;top:185.5px;width:65.7px;height:22.5px;background:#e1e1e1;border:1px solid #adadad;"></div>
<div class="t" style="left:1704.0px;top:190.1px;width:65.7px;text-align:center;font:13.5px/1 'Liberation Sans',sans-serif;color:#000;">Delete all</div>
<div class="a" style="left:1772.0px;top:185.5px;width:52.0px;height:22.5px;background:#cccccc;border:1px solid #bfbfbf;"></div>
<div class="t" style="left:1772.0px;top:190.1px;width:52.0px;text-align:center;font:13.5px/1 'Liberation Sans',sans-serif;color:#838383;">Reset</div>
<div class="a" style="left:1904.0px;top:185.5px;width:23.0px;height:22.5px;background:#cccccc;border:1px solid #bfbfbf;"></div>
<svg class="a" style="left:1904.0px;top:185.5px;" width="23" height="22.5" viewBox="0 0 23 22.5"><path d="M6.9,11.05 L11.5,5.65 L16.1,11.05 Z M10.0,10.25 H13.0 V16.45 H10.0 Z" fill="#3a3a3a"/></svg>
<div class="a" style="left:1929.5px;top:185.5px;width:22.5px;height:22.5px;background:#e1e1e1;border:1px solid #adadad;"></div>
<svg class="a" style="left:1929.5px;top:185.5px;" width="22.5" height="22.5" viewBox="0 0 22.5 22.5"><path d="M6.65,11.45 L11.25,16.85 L15.85,11.45 Z M9.75,12.25 H12.75 V6.05 H9.75 Z" fill="#000"/></svg>
<div class="a" style="left:1531.0px;top:235.0px;width:432.0px;height:198.5px;border:1px solid #dcdcdc;"></div>
<div class="t" style="left:1539.0px;top:227.2px;padding:0 4px;background:#808080;font:13.5px/1.2 'Liberation Sans',sans-serif;color:#000;">Standard resolutions (14 slots left)</div>
<div class="a" style="left:1543.0px;top:251.0px;width:409.0px;height:137.6px;background:#fff;border:1px solid #d0d0d0;"></div>
<div class="t" style="left:1546.8px;top:254.3px;font:14px/1 'Liberation Sans',sans-serif;color:#000;">640x480 (4:3) @ 60 Hz</div>
<div class="t" style="left:1546.8px;top:271.3px;font:14px/1 'Liberation Sans',sans-serif;color:#000;">800x600 (4:3) @ 60 Hz</div>
<div class="t" style="left:1546.8px;top:288.3px;font:14px/1 'Liberation Sans',sans-serif;color:#000;">1024x768 (4:3) @ 60 Hz</div>
<div class="t" style="left:1546.8px;top:305.3px;font:14px/1 'Liberation Sans',sans-serif;color:#000;">1152x864 (4:3) @ 60 Hz</div>
<div class="t" style="left:1546.8px;top:322.3px;font:14px/1 'Liberation Sans',sans-serif;color:#000;">1280x1024 (5:4) @ 60 Hz</div>
<div class="t" style="left:1546.8px;top:339.3px;font:14px/1 'Liberation Sans',sans-serif;color:#000;">1920x1080 (16:9) @ 60 Hz</div>
<div class="a" style="left:1542.7px;top:400.7px;width:50.5px;height:21.5px;background:#e1e1e1;border:1px solid #adadad;"></div>
<div class="t" style="left:1542.7px;top:404.8px;width:50.5px;text-align:center;font:13.5px/1 'Liberation Sans',sans-serif;color:#000;">Add...</div>
<div class="a" style="left:1596.0px;top:400.7px;width:51.0px;height:21.5px;background:#cccccc;border:1px solid #bfbfbf;"></div>
<div class="t" style="left:1596.0px;top:404.8px;width:51.0px;text-align:center;font:13.5px/1 'Liberation Sans',sans-serif;color:#838383;">Edit...</div>
<div class="a" style="left:1650.0px;top:400.7px;width:51.0px;height:21.5px;background:#cccccc;border:1px solid #bfbfbf;"></div>
<div class="t" style="left:1650.0px;top:404.8px;width:51.0px;text-align:center;font:13.5px/1 'Liberation Sans',sans-serif;color:#838383;">Delete</div>
<div class="a" style="left:1704.0px;top:400.7px;width:65.7px;height:21.5px;background:#e1e1e1;border:1px solid #adadad;"></div>
<div class="t" style="left:1704.0px;top:404.8px;width:65.7px;text-align:center;font:13.5px/1 'Liberation Sans',sans-serif;color:#000;">Delete all</div>
<div class="a" style="left:1772.0px;top:400.7px;width:52.0px;height:21.5px;background:#cccccc;border:1px solid #bfbfbf;"></div>
<div class="t" style="left:1772.0px;top:404.8px;width:52.0px;text-align:center;font:13.5px/1 'Liberation Sans',sans-serif;color:#838383;">Reset</div>
<div class="a" style="left:1904.0px;top:400.7px;width:23.0px;height:21.5px;background:#cccccc;border:1px solid #bfbfbf;"></div>
<svg class="a" style="left:1904.0px;top:400.7px;" width="23" height="21.5" viewBox="0 0 23 21.5"><path d="M6.9,10.55 L11.5,5.15 L16.1,10.55 Z M10.0,9.75 H13.0 V15.95 H10.0 Z" fill="#3a3a3a"/></svg>
<div class="a" style="left:1929.5px;top:400.7px;width:22.5px;height:21.5px;background:#cccccc;border:1px solid #bfbfbf;"></div>
<svg class="a" style="left:1929.5px;top:400.7px;" width="22.5" height="21.5" viewBox="0 0 22.5 21.5"><path d="M6.65,10.95 L11.25,16.35 L15.85,10.95 Z M9.75,11.75 H12.75 V5.55 H9.75 Z" fill="#3a3a3a"/></svg>
<div class="a" style="left:1531.0px;top:450.0px;width:432.0px;height:113.5px;border:1px solid #dcdcdc;"></div>
<div class="t" style="left:1539.0px;top:442.2px;padding:0 4px;background:#808080;font:13.5px/1.2 'Liberation Sans',sans-serif;color:#000;">Extension blocks (2 slots left)</div>
<div class="a" style="left:1543.0px;top:466.0px;width:409.0px;height:53.0px;background:#fff;border:1px solid #d0d0d0;"></div>
<div class="t" style="left:1546.8px;top:468.3px;font:14px/1 'Liberation Sans',sans-serif;color:#6d6d6d;">Default extension block</div>
<div class="a" style="left:1542.7px;top:530.7px;width:50.5px;height:21.3px;background:#e1e1e1;border:1px solid #adadad;"></div>
<div class="t" style="left:1542.7px;top:534.7px;width:50.5px;text-align:center;font:13.5px/1 'Liberation Sans',sans-serif;color:#000;">Add...</div>
<div class="a" style="left:1596.0px;top:530.7px;width:51.0px;height:21.3px;background:#cccccc;border:1px solid #bfbfbf;"></div>
<div class="t" style="left:1596.0px;top:534.7px;width:51.0px;text-align:center;font:13.5px/1 'Liberation Sans',sans-serif;color:#838383;">Edit...</div>
<div class="a" style="left:1650.0px;top:530.7px;width:51.0px;height:21.3px;background:#cccccc;border:1px solid #bfbfbf;"></div>
<div class="t" style="left:1650.0px;top:534.7px;width:51.0px;text-align:center;font:13.5px/1 'Liberation Sans',sans-serif;color:#838383;">Delete</div>
<div class="a" style="left:1704.0px;top:530.7px;width:65.7px;height:21.3px;background:#e1e1e1;border:1px solid #adadad;"></div>
<div class="t" style="left:1704.0px;top:534.7px;width:65.7px;text-align:center;font:13.5px/1 'Liberation Sans',sans-serif;color:#000;">Delete all</div>
<div class="a" style="left:1772.0px;top:530.7px;width:52.0px;height:21.3px;background:#cccccc;border:1px solid #bfbfbf;"></div>
<div class="t" style="left:1772.0px;top:534.7px;width:52.0px;text-align:center;font:13.5px/1 'Liberation Sans',sans-serif;color:#838383;">Reset</div>
<div class="a" style="left:1904.0px;top:530.7px;width:23.0px;height:21.3px;background:#cccccc;border:1px solid #bfbfbf;"></div>
<svg class="a" style="left:1904.0px;top:530.7px;" width="23" height="21.299999999999955" viewBox="0 0 23 21.299999999999955"><path d="M6.9,10.449999999999978 L11.5,5.049999999999978 L16.1,10.449999999999978 Z M10.0,9.649999999999977 H13.0 V15.849999999999977 H10.0 Z" fill="#3a3a3a"/></svg>
<div class="a" style="left:1929.5px;top:530.7px;width:22.5px;height:21.3px;background:#cccccc;border:1px solid #bfbfbf;"></div>
<svg class="a" style="left:1929.5px;top:530.7px;" width="22.5" height="21.299999999999955" viewBox="0 0 22.5 21.299999999999955"><path d="M6.65,10.849999999999977 L11.25,16.24999999999998 L15.85,10.849999999999977 Z M9.75,11.649999999999977 H12.75 V5.449999999999977 H9.75 Z" fill="#3a3a3a"/></svg>
<div class="a" style="left:1339.4px;top:574.4px;width:85.3px;height:25.6px;background:#e1e1e1;border:1px solid #adadad;"></div>
<div class="t" style="left:1339.4px;top:580.6px;width:85.3px;text-align:center;font:13.5px/1 'Liberation Sans',sans-serif;color:#000;">Import...</div>
<div class="a" style="left:1435.3px;top:574.4px;width:85.4px;height:25.6px;background:#e1e1e1;border:1px solid #adadad;"></div>
<div class="t" style="left:1435.3px;top:580.6px;width:85.4px;text-align:center;font:13.5px/1 'Liberation Sans',sans-serif;color:#000;">Export...</div>
<div class="a" style="left:1763.3px;top:574.4px;width:94.1px;height:25.6px;background:#e1e1e1;border:2px solid #0078d7;"></div>
<div class="t" style="left:1763.3px;top:580.6px;width:94.1px;text-align:center;font:13.5px/1 'Liberation Sans',sans-serif;color:#000;">OK</div>
<div class="a" style="left:1868.0px;top:574.4px;width:94.3px;height:25.6px;background:#e1e1e1;border:1px solid #adadad;"></div>
<div class="t" style="left:1868.0px;top:580.6px;width:94.3px;text-align:center;font:13.5px/1 'Liberation Sans',sans-serif;color:#000;">Cancel</div>
<div class="a" style="left:1328.0px;top:614.0px;width:492.0px;height:513.0px;background:#808080;border:1px solid #1a6bb5;"></div>
<div class="a" style="left:1328.0px;top:614.0px;width:492.0px;height:32.0px;background:#005a9e;"></div>
<div class="t" style="left:1333.0px;top:623.5px;font:15px/1 'Liberation Sans',sans-serif;color:#fff;">Detailed Resolution</div>
<svg class="a" style="left:1791.0px;top:624.0px;" width="13" height="13" viewBox="0 0 13 13"><path d="M0.5,0.5 L12.5,12.5 M12.5,0.5 L0.5,12.5" stroke="#fff" stroke-width="1.2"/></svg>
<div class="t" style="left:1339.0px;top:661.9px;font:14px/1 'Liberation Sans',sans-serif;color:#000;">Timing:</div>
<div class="a" style="left:1390.4px;top:656.3px;width:248.6px;height:24.4px;background:#e5e5e5;border:1px solid #cfcfcf;"></div>
<div class="t" style="left:1394.0px;top:661.6px;font:14px/1 'Liberation Sans',sans-serif;color:#000;">Manual</div>
<svg class="a" style="left:1622.0px;top:664.5px;" width="12" height="8" viewBox="0 0 12 8"><path d="M1,2 L6,7 L11,2" stroke="#333" stroke-width="1.1" fill="none"/></svg>
<div class="a" style="left:1649.5px;top:657.0px;width:50.9px;height:23.0px;background:#e1e1e1;border:1px solid #adadad;"></div>
<div class="t" style="left:1649.5px;top:661.6px;width:50.9px;text-align:center;font:14px/1 'Liberation Sans',sans-serif;color:#000;">Copy</div>
<div class="a" style="left:1703.0px;top:657.0px;width:52.0px;height:23.0px;background:#cccccc;border:1px solid #bfbfbf;"></div>
<div class="t" style="left:1703.0px;top:661.6px;width:52.0px;text-align:center;font:14px/1 'Liberation Sans',sans-serif;color:#838383;">Paste</div>
<div class="a" style="left:1757.7px;top:657.0px;width:51.3px;height:23.0px;background:#cccccc;border:1px solid #bfbfbf;"></div>
<div class="t" style="left:1757.7px;top:661.6px;width:51.3px;text-align:center;font:14px/1 'Liberation Sans',sans-serif;color:#838383;">Reset</div>
<div class="a" style="left:1339.0px;top:696.6px;width:470.0px;height:253.7px;border:1px solid #dcdcdc;"></div>
<div class="t" style="left:1347.0px;top:688.6px;padding:0 4px;background:#808080;font:14px/1.2 'Liberation Sans',sans-serif;color:#000;">Parameters</div>
<div class="t" style="left:1472.7px;top:707.4px;font:14px/1 'Liberation Sans',sans-serif;font-weight:700;color:#000;">Horizontal</div>
<div class="t" style="left:1615.4px;top:707.4px;font:14px/1 'Liberation Sans',sans-serif;font-weight:700;color:#000;">Vertical</div>
<div class="t" style="left:1370.0px;top:735.1px;font:14px/1 'Liberation Sans',sans-serif;color:#000;">Active:</div>
<div class="a" style="left:1475.6px;top:730.0px;width:62.4px;height:23.0px;background:#fff;"></div>
<div class="t" style="left:1478.6px;top:735.1px;font:14px/1 'Liberation Sans',sans-serif;color:#000;">3840</div>
<div class="t" style="left:1546.5px;top:735.1px;font:14px/1 'Liberation Sans',sans-serif;color:#000;">pixels</div>
<div class="a" style="left:1610.0px;top:730.0px;width:62.0px;height:23.0px;background:#fff;"></div>
<div class="t" style="left:1613.0px;top:735.1px;font:14px/1 'Liberation Sans',sans-serif;color:#000;">2160</div>
<div class="t" style="left:1680.0px;top:735.1px;font:14px/1 'Liberation Sans',sans-serif;color:#000;">lines</div>
<div class="t" style="left:1370.0px;top:766.1px;font:14px/1 'Liberation Sans',sans-serif;color:#000;">Front porch:</div>
<div class="a" style="left:1475.6px;top:761.0px;width:62.4px;height:23.0px;background:#fff;"></div>
<div class="t" style="left:1478.6px;top:766.1px;font:14px/1 'Liberation Sans',sans-serif;color:#000;">176</div>
<div class="t" style="left:1546.5px;top:766.1px;font:14px/1 'Liberation Sans',sans-serif;color:#000;">pixels</div>
<div class="a" style="left:1610.0px;top:761.0px;width:62.0px;height:23.0px;background:#fff;"></div>
<div class="t" style="left:1613.0px;top:766.1px;font:14px/1 'Liberation Sans',sans-serif;color:#000;">8</div>
<div class="t" style="left:1680.0px;top:766.1px;font:14px/1 'Liberation Sans',sans-serif;color:#000;">lines</div>
<div class="t" style="left:1370.0px;top:797.1px;font:14px/1 'Liberation Sans',sans-serif;color:#000;">Sync width:</div>
<div class="a" style="left:1475.6px;top:792.0px;width:62.4px;height:23.0px;background:#fff;"></div>
<div class="t" style="left:1478.6px;top:797.1px;font:14px/1 'Liberation Sans',sans-serif;color:#000;">88</div>
<div class="t" style="left:1546.5px;top:797.1px;font:14px/1 'Liberation Sans',sans-serif;color:#000;">pixels</div>
<div class="a" style="left:1610.0px;top:792.0px;width:62.0px;height:23.0px;background:#fff;"></div>
<div class="t" style="left:1613.0px;top:797.1px;font:14px/1 'Liberation Sans',sans-serif;color:#000;">10</div>
<div class="t" style="left:1680.0px;top:797.1px;font:14px/1 'Liberation Sans',sans-serif;color:#000;">lines</div>
<svg class="a" style="left:1350.4px;top:826.5px;" width="17" height="17" viewBox="0 0 17 17"><circle cx="8.5" cy="8.5" r="7.5" fill="#fff" stroke="#333" stroke-width="1"/><circle cx="8.5" cy="8.5" r="4.5" fill="#333"/></svg>
<div class="t" style="left:1370.0px;top:828.1px;font:14px/1 'Liberation Sans',sans-serif;color:#000;">Back porch:</div>
<div class="a" style="left:1475.6px;top:823.0px;width:62.4px;height:23.0px;background:#fff;"></div>
<div class="t" style="left:1478.6px;top:828.1px;font:14px/1 'Liberation Sans',sans-serif;color:#000;">296</div>
<div class="t" style="left:1546.5px;top:828.1px;font:14px/1 'Liberation Sans',sans-serif;color:#000;">pixels</div>
<div class="a" style="left:1610.0px;top:823.0px;width:62.0px;height:23.0px;background:#fff;"></div>
<div class="t" style="left:1613.0px;top:828.1px;font:14px/1 'Liberation Sans',sans-serif;color:#000;">72</div>
<div class="t" style="left:1680.0px;top:828.1px;font:14px/1 'Liberation Sans',sans-serif;color:#000;">lines</div>
<svg class="a" style="left:1350.4px;top:857.5px;" width="17" height="17" viewBox="0 0 17 17"><circle cx="8.5" cy="8.5" r="7.5" fill="#fff" stroke="#333" stroke-width="1"/></svg>
<div class="t" style="left:1370.0px;top:859.1px;font:14px/1 'Liberation Sans',sans-serif;color:#000;">Blanking:</div>
<div class="a" style="left:1475.6px;top:854.0px;width:62.4px;height:23.0px;background:#fff;"></div>
<div class="t" style="left:1478.6px;top:859.1px;font:14px/1 'Liberation Sans',sans-serif;color:#6d6d6d;">560</div>
<div class="t" style="left:1546.5px;top:859.1px;font:14px/1 'Liberation Sans',sans-serif;color:#000;">pixels</div>
<div class="a" style="left:1610.0px;top:854.0px;width:62.0px;height:23.0px;background:#fff;"></div>
<div class="t" style="left:1613.0px;top:859.1px;font:14px/1 'Liberation Sans',sans-serif;color:#6d6d6d;">90</div>
<div class="t" style="left:1680.0px;top:859.1px;font:14px/1 'Liberation Sans',sans-serif;color:#000;">lines</div>
<svg class="a" style="left:1350.4px;top:888.5px;" width="17" height="17" viewBox="0 0 17 17"><circle cx="8.5" cy="8.5" r="7.5" fill="#fff" stroke="#333" stroke-width="1"/></svg>
<div class="t" style="left:1370.0px;top:890.1px;font:14px/1 'Liberation Sans',sans-serif;color:#000;">Total:</div>
<div class="a" style="left:1475.6px;top:885.0px;width:62.4px;height:23.0px;background:#fff;"></div>
<div class="t" style="left:1478.6px;top:890.1px;font:14px/1 'Liberation Sans',sans-serif;color:#6d6d6d;">4400</div>
<div class="t" style="left:1546.5px;top:890.1px;font:14px/1 'Liberation Sans',sans-serif;color:#000;">pixels</div>
<div class="a" style="left:1610.0px;top:885.0px;width:62.0px;height:23.0px;background:#fff;"></div>
<div class="t" style="left:1613.0px;top:890.1px;font:14px/1 'Liberation Sans',sans-serif;color:#6d6d6d;">2250</div>
<div class="t" style="left:1680.0px;top:890.1px;font:14px/1 'Liberation Sans',sans-serif;color:#000;">lines</div>
<div class="t" style="left:1370.0px;top:920.1px;font:14px/1 'Liberation Sans',sans-serif;color:#000;">Sync polarity:</div>
<div class="a" style="left:1475.2px;top:915.4px;width:63.4px;height:24.1px;background:#e5e5e5;border:1px solid #cfcfcf;"></div>
<div class="t" style="left:1482.0px;top:920.6px;font:14px/1 'Liberation Sans',sans-serif;color:#000;">+</div>
<svg class="a" style="left:1521.6px;top:923.5px;" width="12" height="8" viewBox="0 0 12 8"><path d="M1,2 L6,7 L11,2" stroke="#333" stroke-width="1.1" fill="none"/></svg>
<div class="a" style="left:1609.0px;top:915.4px;width:63.5px;height:24.1px;background:#e5e5e5;border:1px solid #cfcfcf;"></div>
<div class="t" style="left:1616.0px;top:920.6px;font:14px/1 'Liberation Sans',sans-serif;color:#000;">+</div>
<svg class="a" style="left:1655.5px;top:923.5px;" width="12" height="8" viewBox="0 0 12 8"><path d="M1,2 L6,7 L11,2" stroke="#333" stroke-width="1.1" fill="none"/></svg>
<div class="a" style="left:1339.3px;top:966.0px;width:469.1px;height:113.5px;border:1px solid #dcdcdc;"></div>
<div class="t" style="left:1347.3px;top:958.0px;padding:0 4px;background:#808080;font:14px/1.2 'Liberation Sans',sans-serif;color:#000;">Frequency</div>
<svg class="a" style="left:1350.4px;top:986.5px;" width="17" height="17" viewBox="0 0 17 17"><circle cx="8.5" cy="8.5" r="7.5" fill="#fff" stroke="#333" stroke-width="1"/><circle cx="8.5" cy="8.5" r="4.5" fill="#333"/></svg>
<div class="t" style="left:1370.0px;top:988.1px;font:14px/1 'Liberation Sans',sans-serif;color:#000;">Refresh rate:</div>
<div class="a" style="left:1475.6px;top:983.0px;width:62.4px;height:23.0px;background:#fff;"></div>
<div class="t" style="left:1478.6px;top:988.1px;font:14px/1 'Liberation Sans',sans-serif;color:#000;">60.000</div>
<div class="t" style="left:1546.5px;top:988.1px;font:14px/1 'Liberation Sans',sans-serif;color:#000;">Hz</div>
<div class="t" style="left:1609.0px;top:988.1px;font:14px/1 'Liberation Sans',sans-serif;color:#000;">Actual: 60.000 Hz</div>
<svg class="a" style="left:1350.4px;top:1017.5px;" width="17" height="17" viewBox="0 0 17 17"><circle cx="8.5" cy="8.5" r="7.5" fill="#fff" stroke="#333" stroke-width="1"/></svg>
<div class="t" style="left:1370.0px;top:1019.1px;font:14px/1 'Liberation Sans',sans-serif;color:#000;">Horizontal:</div>
<div class="a" style="left:1475.6px;top:1014.0px;width:62.4px;height:23.0px;background:#fff;"></div>
<div class="t" style="left:1478.6px;top:1019.1px;font:14px/1 'Liberation Sans',sans-serif;color:#6d6d6d;">135.000</div>
<div class="t" style="left:1546.5px;top:1019.1px;font:14px/1 'Liberation Sans',sans-serif;color:#000;">kHz</div>
<div class="t" style="left:1609.0px;top:1019.1px;font:14px/1 'Liberation Sans',sans-serif;color:#000;">Actual: 135.000 kHz</div>
<svg class="a" style="left:1350.4px;top:1048.5px;" width="17" height="17" viewBox="0 0 17 17"><circle cx="8.5" cy="8.5" r="7.5" fill="#fff" stroke="#333" stroke-width="1"/></svg>
<div class="t" style="left:1370.0px;top:1050.1px;font:14px/1 'Liberation Sans',sans-serif;color:#000;">Pixel clock:</div>
<div class="a" style="left:1475.6px;top:1045.0px;width:62.4px;height:23.0px;background:#fff;"></div>
<div class="t" style="left:1478.6px;top:1050.1px;font:14px/1 'Liberation Sans',sans-serif;color:#6d6d6d;">594.00</div>
<div class="t" style="left:1546.5px;top:1050.1px;font:14px/1 'Liberation Sans',sans-serif;color:#000;">MHz</div>
<div class="a" style="left:1609.0px;top:1048.5px;width:16.0px;height:16.0px;background:#fff;border:1px solid #333;"></div>
<div class="t" style="left:1629.0px;top:1050.1px;font:14px/1 'Liberation Sans',sans-serif;color:#000;">Interlaced</div>
<div class="a" style="left:1609.0px;top:1090.4px;width:94.8px;height:26.3px;background:#e1e1e1;border:2px solid #0078d7;"></div>
<div class="t" style="left:1609.0px;top:1096.7px;width:94.8px;text-align:center;font:14px/1 'Liberation Sans',sans-serif;color:#000;">OK</div>
<div class="a" style="left:1714.4px;top:1090.4px;width:94.5px;height:26.3px;background:#e1e1e1;border:1px solid #adadad;"></div>
<div class="t" style="left:1714.4px;top:1096.7px;width:94.5px;text-align:center;font:14px/1 'Liberation Sans',sans-serif;color:#000;">Cancel</div>
<div class="a" style="left:1977.0px;top:6.0px;width:1184.0px;height:1590.0px;background:#1b1b1b;border:1px solid #3a3a3a;border-bottom:none;"></div>
<div class="a" style="left:1988.0px;top:17.5px;width:300.4px;height:43.5px;background:#35363a;border-radius:9px 9px 0 0;"></div>
<svg class="a" style="left:1980.0px;top:52.0px;" width="10" height="9" viewBox="0 0 10 9"><path d="M0,9 Q8,9 8,0 L10,0 L10,9 Z" fill="#35363a"/></svg>
<svg class="a" style="left:2286.4px;top:52.0px;" width="10" height="9" viewBox="0 0 10 9"><path d="M10,9 Q2,9 2,0 L0,0 L0,9 Z" fill="#35363a"/></svg>
<svg class="a" style="left:2002.3px;top:28.1px;" width="24" height="24" viewBox="0 0 24 24"><g transform="scale(0.9)"><path fill="#e8eaed" d="M12 2C6.48 2 2 6.48 2 12s4.48 10 10 10 10-4.48 10-10S17.52 2 12 2zm-1 17.93c-3.95-.49-7-3.85-7-7.93 0-.62.08-1.21.21-1.79L9 15v1c0 1.1.9 2 2 2v1.93zm6.9-2.54c-.26-.81-1-1.39-1.9-1.39h-1v-3c0-.55-.45-1-1-1H8v-2h2c.55 0 1-.45 1-1V7h2c1.1 0 2-.9 2-2v-.41c2.93 1.19 5 4.06 5 7.41 0 2.08-.8 3.97-2.1 5.39z"/></g></svg>
<div class="t" style="left:2033.0px;top:31.4px;font:16px/1 'Liberation Sans',sans-serif;color:#e3e3e3;letter-spacing:-0.4px;">Video Timings Calculator</div>
<svg class="a" style="left:2262.0px;top:33.0px;" width="12" height="12" viewBox="0 0 12 12"><path d="M1,1 L11,11 M11,1 L1,11" stroke="#dadce0" stroke-width="1.6"/></svg>
<svg class="a" style="left:2307.0px;top:31.0px;" width="16" height="16" viewBox="0 0 16 16"><path d="M8,1 V15 M1,8 H15" stroke="#dadce0" stroke-width="1.8"/></svg>
<div class="a" style="left:3011.0px;top:25.0px;width:13.0px;height:1.0px;background:#a8a8a8;"></div>
<div class="a" style="left:3068.0px;top:19.0px;width:13.0px;height:13.0px;border:1px solid #a8a8a8;"></div>
<svg class="a" style="left:3125.0px;top:19.0px;" width="14" height="14" viewBox="0 0 14 14"><path d="M0.5,0.5 L13.5,13.5 M13.5,0.5 L0.5,13.5" stroke="#a8a8a8" stroke-width="1"/></svg>
<div class="a" style="left:1978.0px;top:60.0px;width:1182.0px;height:45.0px;background:#35363a;"></div>
<svg class="a" style="left:1993.3px;top:70.0px;" width="24" height="24" viewBox="0 0 24 24"><path fill="#e8eaed" d="M20 11H7.83l5.59-5.59L12 4l-8 8 8 8 1.41-1.41L7.83 13H20v-2z"/></svg>
<svg class="a" style="left:2033.5px;top:70.0px;" width="24" height="24" viewBox="0 0 24 24"><path fill="#8b8c8f" d="M12 4l-1.41 1.41L16.17 11H4v2h12.17l-5.58 5.59L12 20l8-8z"/></svg>
<svg class="a" style="left:2073.2px;top:70.2px;" width="26" height="26" viewBox="0 0 26 26"><g transform="scale(1.06)"><path fill="#e8eaed" d="M17.65 6.35C16.2 4.9 14.21 4 12 4c-4.42 0-7.99 3.58-7.99 8s3.57 8 7.99 8c3.73 0 6.84-2.55 7.73-6h-2.08c-.82 2.33-3.04 4-5.65 4-3.31 0-6-2.69-6-6s2.69-6 6-6c1.66 0 3.14.69 4.22 1.78L13 11h7V4l-2.35 2.35z"/></g></svg>
<div class="a" style="left:2113.3px;top:65.0px;width:872.5px;height:35.0px;background:#202124;border-radius:17.5px;"></div>
<svg class="a" style="left:2129.0px;top:75.0px;" width="13" height="15" viewBox="0 0 13 15"><path d="M3.2,7 V4.6 A3.3,3.3 0 0 1 9.8,4.6 V7" stroke="#e8eaed" stroke-width="1.6" fill="none"/><rect x="1" y="6.8" width="11" height="7.8" rx="1" fill="#e8eaed"/></svg>
<div class="t" style="left:2156.4px;top:75.1px;font:17.5px/1 'Liberation Sans',sans-serif;color:#e8eaed;"><span style="color:#e8eaed">tomverbeure.github.io</span><span style="color:#9aa0a6">/video_timings_calculator</span></div>
<svg class="a" style="left:2953.0px;top:73.0px;" width="20" height="20" viewBox="0 0 20 20"><path d="M10,1.8 L12.4,7.3 L18.3,7.6 L13.7,11.4 L15.3,17.2 L10,14 L4.7,17.2 L6.3,11.4 L1.7,7.6 L7.6,7.3 Z" stroke="#bdc1c6" stroke-width="1.7" fill="none" stroke-linejoin="round"/></svg>
<svg class="a" style="left:3002.0px;top:72.0px;" width="22" height="20" viewBox="0 0 22 20"><path d="M3,19 Q5,3 11,2 Q17,3 19,19 Z" fill="#1f6b80"/><circle cx="7.5" cy="12" r="3.2" fill="#e45a3a" stroke="#fff" stroke-width="1.2"/><circle cx="14.5" cy="12" r="3.2" fill="#e45a3a" stroke="#fff" stroke-width="1.2"/><path d="M10.7,12 H11.3" stroke="#fff" stroke-width="1.2"/><rect x="4" y="16" width="14" height="3" fill="#223"/></svg>
<svg class="a" style="left:3043.0px;top:73.0px;" width="20" height="19" viewBox="0 0 20 19"><path d="M3,5 H7 Q7,1 10,1 Q13,1 13,5 H16 V9 Q19.5,9 19.5,11.5 Q19.5,14 16,14 V18 H12 Q12,15 9.5,15 Q7,15 7,18 H3 V14 Q6,14 6,11.5 Q6,9 3,9 Z" fill="#f1f3f4"/></svg>
<svg class="a" style="left:3079.0px;top:68.0px;" width="28" height="28" viewBox="0 0 28 28"><circle cx="14" cy="14" r="14" fill="#7e1fa8"/><path d="M10.5,8 H17 V18 M12,8 Q12,15 9,18 M7.5,18 H19.5 M8,18 V21 M19,18 V21" stroke="#fff" stroke-width="1.5" fill="none"/></svg>
<div class="a" style="left:3131.0px;top:74.8px;width:3.4px;height:3.4px;background:#e8eaed;border-radius:50%;"></div>
<div class="a" style="left:3131.0px;top:80.8px;width:3.4px;height:3.4px;background:#e8eaed;border-radius:50%;"></div>
<div class="a" style="left:3131.0px;top:86.8px;width:3.4px;height:3.4px;background:#e8eaed;border-radius:50%;"></div>
<div class="a" style="left:1978.0px;top:105.0px;width:1182.0px;height:1491.0px;background:#212223;"></div>
<div class="t" style="left:1988.0px;top:119.4px;font:40px/1 'Liberation Serif',serif;font-weight:700;color:#cbc9c5;">Video Timings Calculator</div>
<div class="t" style="left:1989.0px;top:190.7px;font:20px/1 'Liberation Serif',serif;color:#cbc9c5;">For more information, see <span style="color:#3c8ff5;text-decoration:underline">this blog post</span>.</div>
<div class="t" style="left:1988.7px;top:240.3px;font:30px/1 'Liberation Serif',serif;font-weight:700;color:#cbc9c5;">Input Parameters</div>
<div class="t" style="left:1991.5px;top:301.4px;font:20px/1 'Liberation Serif',serif;color:#cbc9c5;">Predefined Mode</div>
<div class="t" style="left:1991.5px;top:330.7px;font:20px/1 'Liberation Serif',serif;color:#cbc9c5;">Horizontal Pixels</div>
<div class="t" style="left:1991.5px;top:362.4px;font:20px/1 'Liberation Serif',serif;color:#cbc9c5;">Vertical Pixels</div>
<div class="t" style="left:1991.5px;top:394.5px;font:20px/1 'Liberation Serif',serif;color:#cbc9c5;">Refresh Rate (Hz)</div>
<div class="t" style="left:1991.5px;top:424.6px;font:20px/1 'Liberation Serif',serif;color:#cbc9c5;">Margins</div>
<div class="t" style="left:1991.5px;top:452.7px;font:20px/1 'Liberation Serif',serif;color:#cbc9c5;">Interlaced</div>
<div class="t" style="left:1991.5px;top:480.9px;font:20px/1 'Liberation Serif',serif;color:#cbc9c5;">Bits per Component</div>
<div class="t" style="left:1991.5px;top:508.6px;font:20px/1 'Liberation Serif',serif;color:#cbc9c5;">Color Format</div>
<div class="a" style="left:2157.2px;top:299.9px;width:154.6px;height:22.8px;background:#202223;border:1px solid #746c60;"></div>
<div class="t" style="left:2163.7px;top:303.1px;font:16.67px/1 'Liberation Sans',sans-serif;color:#dad8d4;">4K / 60</div>
<svg class="a" style="left:2293.8px;top:307.3px;" width="12" height="8" viewBox="0 0 12 8"><path d="M1.5,1.5 L6,6 L10.5,1.5" stroke="#dcd8d1" stroke-width="1.6" fill="none"/></svg>
<div class="a" style="left:2157.0px;top:328.0px;width:206.0px;height:26.8px;background:#202223;border:2px solid;border-color:#111 #746c60 #746c60 #111;"></div>
<div class="t" style="left:2162.0px;top:333.2px;font:16.67px/1 'Liberation Sans',sans-serif;color:#dad8d4;">3840</div>
<div class="a" style="left:2157.0px;top:360.2px;width:206.0px;height:26.3px;background:#202223;border:2px solid;border-color:#111 #746c60 #746c60 #111;"></div>
<div class="t" style="left:2162.0px;top:365.2px;font:16.67px/1 'Liberation Sans',sans-serif;color:#dad8d4;">2160</div>
<div class="a" style="left:2157.0px;top:391.9px;width:206.0px;height:27.0px;background:#202223;border:2px solid;border-color:#111 #746c60 #746c60 #111;"></div>
<div class="t" style="left:2162.0px;top:397.2px;font:16.67px/1 'Liberation Sans',sans-serif;color:#dad8d4;">60</div>
<div class="t" style="left:2368.4px;top:330.7px;font:20px/1 'Liberation Serif',serif;color:#cbc9c5;">Ok</div>
<div class="t" style="left:2368.4px;top:362.4px;font:20px/1 'Liberation Serif',serif;color:#cbc9c5;">Ok</div>
<div class="t" style="left:2368.4px;top:394.5px;font:20px/1 'Liberation Serif',serif;color:#cbc9c5;">Ok</div>
<div class="a" style="left:2157.0px;top:424.3px;width:57.7px;height:22.0px;background:#202223;border:1px solid #746c60;"></div>
<div class="t" style="left:2163.5px;top:427.1px;font:16.67px/1 'Liberation Sans',sans-serif;color:#dad8d4;">No</div>
<svg class="a" style="left:2196.7px;top:431.3px;" width="12" height="8" viewBox="0 0 12 8"><path d="M1.5,1.5 L6,6 L10.5,1.5" stroke="#dcd8d1" stroke-width="1.6" fill="none"/></svg>
<div class="a" style="left:2157.0px;top:452.2px;width:57.7px;height:22.3px;background:#202223;border:1px solid #746c60;"></div>
<div class="t" style="left:2163.5px;top:455.2px;font:16.67px/1 'Liberation Sans',sans-serif;color:#dad8d4;">No</div>
<svg class="a" style="left:2196.7px;top:459.4px;" width="12" height="8" viewBox="0 0 12 8"><path d="M1.5,1.5 L6,6 L10.5,1.5" stroke="#dcd8d1" stroke-width="1.6" fill="none"/></svg>
<div class="a" style="left:2157.0px;top:480.4px;width:48.8px;height:21.8px;background:#202223;border:1px solid #746c60;"></div>
<div class="t" style="left:2163.5px;top:483.1px;font:16.67px/1 'Liberation Sans',sans-serif;color:#dad8d4;">8</div>
<svg class="a" style="left:2187.8px;top:487.3px;" width="12" height="8" viewBox="0 0 12 8"><path d="M1.5,1.5 L6,6 L10.5,1.5" stroke="#dcd8d1" stroke-width="1.6" fill="none"/></svg>
<div class="a" style="left:2157.0px;top:508.5px;width:107.4px;height:21.8px;background:#202223;border:1px solid #746c60;"></div>
<div class="t" style="left:2163.5px;top:511.2px;font:16.67px/1 'Liberation Sans',sans-serif;color:#dad8d4;">RGB 4:4:4</div>
<svg class="a" style="left:2246.4px;top:515.4px;" width="12" height="8" viewBox="0 0 12 8"><path d="M1.5,1.5 L6,6 L10.5,1.5" stroke="#dcd8d1" stroke-width="1.6" fill="none"/></svg>
<div class="t" style="left:1988.7px;top:560.9px;font:30px/1 'Liberation Serif',serif;font-weight:700;color:#cbc9c5;">Timings</div>
<div class="t" style="left:2269.7px;top:622.1px;font:20px/1 'Liberation Serif',serif;font-weight:700;color:#cbc9c5;">CVT</div>
<div class="t" style="left:2366.4px;top:622.1px;font:20px/1 'Liberation Serif',serif;font-weight:700;color:#cbc9c5;">CVT-RB</div>
<div class="t" style="left:2471.0px;top:622.1px;font:20px/1 'Liberation Serif',serif;font-weight:700;color:#cbc9c5;">CVT-RBv2</div>
<div class="t" style="left:2648.0px;top:622.1px;font:20px/1 'Liberation Serif',serif;font-weight:700;color:#cbc9c5;">Custom</div>
<div class="t" style="left:1991.6px;top:649.4px;font:20px/1 'Liberation Serif',serif;color:#cbc9c5;">Aspect Ratio</div>
<div class="t" style="left:2236.0px;top:649.4px;font:20px/1 'Liberation Serif',serif;color:#cbc9c5;">16:9</div>
<div class="t" style="left:2349.7px;top:649.4px;font:20px/1 'Liberation Serif',serif;color:#cbc9c5;">16:9</div>
<div class="t" style="left:2463.9px;top:649.4px;font:20px/1 'Liberation Serif',serif;color:#cbc9c5;">16:9</div>
<div class="t" style="left:2577.7px;top:649.4px;font:20px/1 'Liberation Serif',serif;color:#cbc9c5;">16:9</div>
<div class="t" style="left:1991.6px;top:676.4px;font:20px/1 'Liberation Serif',serif;color:#cbc9c5;">Pixel Clock</div>
<div class="t" style="left:2236.0px;top:676.4px;font:20px/1 'Liberation Serif',serif;color:#cbc9c5;">712.75</div>
<div class="t" style="left:2349.7px;top:676.4px;font:20px/1 'Liberation Serif',serif;color:#cbc9c5;">533.25</div>
<div class="t" style="left:2463.9px;top:676.4px;font:20px/1 'Liberation Serif',serif;color:#cbc9c5;">522.614</div>
<div class="t" style="left:2577.7px;top:676.4px;font:20px/1 'Liberation Serif',serif;color:#cbc9c5;">594</div>
<div class="t" style="left:2788.2px;top:676.4px;font:20px/1 'Liberation Serif',serif;color:#cbc9c5;">MHz</div>
<div class="t" style="left:1991.6px;top:703.4px;font:20px/1 'Liberation Serif',serif;color:#cbc9c5;">H Total</div>
<div class="t" style="left:2236.0px;top:703.4px;font:20px/1 'Liberation Serif',serif;color:#cbc9c5;">5312</div>
<div class="t" style="left:2349.7px;top:703.4px;font:20px/1 'Liberation Serif',serif;color:#cbc9c5;">4000</div>
<div class="t" style="left:2463.9px;top:703.4px;font:20px/1 'Liberation Serif',serif;color:#cbc9c5;">3920</div>
<div class="t" style="left:2577.7px;top:703.4px;font:20px/1 'Liberation Serif',serif;color:#cbc9c5;">4400</div>
<div class="t" style="left:2788.2px;top:703.4px;font:20px/1 'Liberation Serif',serif;color:#cbc9c5;">Pixels</div>
<div class="t" style="left:1991.6px;top:730.4px;font:20px/1 'Liberation Serif',serif;color:#cbc9c5;">H Pixels</div>
<div class="t" style="left:2236.0px;top:730.4px;font:20px/1 'Liberation Serif',serif;color:#cbc9c5;">3840</div>
<div class="t" style="left:2349.7px;top:730.4px;font:20px/1 'Liberation Serif',serif;color:#cbc9c5;">3840</div>
<div class="t" style="left:2463.9px;top:730.4px;font:20px/1 'Liberation Serif',serif;color:#cbc9c5;">3840</div>
<div class="t" style="left:2577.7px;top:730.4px;font:20px/1 'Liberation Serif',serif;color:#cbc9c5;">3840</div>
<div class="t" style="left:2788.2px;top:730.4px;font:20px/1 'Liberation Serif',serif;color:#cbc9c5;">Pixels</div>
<div class="t" style="left:1991.6px;top:759.4px;font:20px/1 'Liberation Serif',serif;color:#cbc9c5;">H Blank</div>
<div class="t" style="left:2236.0px;top:759.4px;font:20px/1 'Liberation Serif',serif;color:#cbc9c5;">1472</div>
<div class="t" style="left:2349.7px;top:759.4px;font:20px/1 'Liberation Serif',serif;color:#cbc9c5;">160</div>
<div class="t" style="left:2463.9px;top:759.4px;font:20px/1 'Liberation Serif',serif;color:#cbc9c5;">80</div>
<div class="a" style="left:2577.7px;top:756.7px;width:205.3px;height:26.8px;background:#202223;border:2px solid;border-color:#111 #746c60 #746c60 #111;"></div>
<div class="t" style="left:2582.7px;top:761.9px;font:16.67px/1 'Liberation Sans',sans-serif;color:#dad8d4;">560</div>
<div class="t" style="left:2788.2px;top:759.4px;font:20px/1 'Liberation Serif',serif;color:#cbc9c5;">Pixels</div>
<div class="t" style="left:1991.6px;top:789.4px;font:20px/1 'Liberation Serif',serif;color:#cbc9c5;">H Front Porch</div>
<div class="t" style="left:2236.0px;top:789.4px;font:20px/1 'Liberation Serif',serif;color:#cbc9c5;">312</div>
<div class="t" style="left:2349.7px;top:789.4px;font:20px/1 'Liberation Serif',serif;color:#cbc9c5;">48</div>
<div class="t" style="left:2463.9px;top:789.4px;font:20px/1 'Liberation Serif',serif;color:#cbc9c5;">8</div>
<div class="t" style="left:2788.2px;top:789.4px;font:20px/1 'Liberation Serif',serif;color:#cbc9c5;">Pixels</div>
<div class="t" style="left:1991.6px;top:816.4px;font:20px/1 'Liberation Serif',serif;color:#cbc9c5;">H Sync</div>
<div class="t" style="left:2236.0px;top:816.4px;font:20px/1 'Liberation Serif',serif;color:#cbc9c5;">424</div>
<div class="t" style="left:2349.7px;top:816.4px;font:20px/1 'Liberation Serif',serif;color:#cbc9c5;">32</div>
<div class="t" style="left:2463.9px;top:816.4px;font:20px/1 'Liberation Serif',serif;color:#cbc9c5;">32</div>
<div class="t" style="left:2788.2px;top:816.4px;font:20px/1 'Liberation Serif',serif;color:#cbc9c5;">Pixels</div>
<div class="t" style="left:1991.6px;top:843.4px;font:20px/1 'Liberation Serif',serif;color:#cbc9c5;">H Back Porch</div>
<div class="t" style="left:2236.0px;top:843.4px;font:20px/1 'Liberation Serif',serif;color:#cbc9c5;">736</div>
<div class="t" style="left:2349.7px;top:843.4px;font:20px/1 'Liberation Serif',serif;color:#cbc9c5;">80</div>
<div class="t" style="left:2463.9px;top:843.4px;font:20px/1 'Liberation Serif',serif;color:#cbc9c5;">40</div>
<div class="t" style="left:2788.2px;top:843.4px;font:20px/1 'Liberation Serif',serif;color:#cbc9c5;">Pixels</div>
<div class="t" style="left:1991.6px;top:870.4px;font:20px/1 'Liberation Serif',serif;color:#cbc9c5;">H Freq</div>
<div class="t" style="left:2236.0px;top:870.4px;font:20px/1 'Liberation Serif',serif;color:#cbc9c5;">134.177</div>
<div class="t" style="left:2349.7px;top:870.4px;font:20px/1 'Liberation Serif',serif;color:#cbc9c5;">133.313</div>
<div class="t" style="left:2463.9px;top:870.4px;font:20px/1 'Liberation Serif',serif;color:#cbc9c5;">133.32</div>
<div class="t" style="left:2577.7px;top:870.4px;font:20px/1 'Liberation Serif',serif;color:#cbc9c5;">135</div>
<div class="t" style="left:2788.2px;top:870.4px;font:20px/1 'Liberation Serif',serif;color:#cbc9c5;">kHz</div>
<div class="t" style="left:1991.6px;top:897.4px;font:20px/1 'Liberation Serif',serif;color:#cbc9c5;">H Period</div>
<div class="t" style="left:2236.0px;top:897.4px;font:20px/1 'Liberation Serif',serif;color:#cbc9c5;">7.453</div>
<div class="t" style="left:2349.7px;top:897.4px;font:20px/1 'Liberation Serif',serif;color:#cbc9c5;">7.501</div>
<div class="t" style="left:2463.9px;top:897.4px;font:20px/1 'Liberation Serif',serif;color:#cbc9c5;">7.501</div>
<div class="t" style="left:2577.7px;top:897.4px;font:20px/1 'Liberation Serif',serif;color:#cbc9c5;">7.407</div>
<div class="t" style="left:2788.2px;top:897.4px;font:20px/1 'Liberation Serif',serif;color:#cbc9c5;">us</div>
<div class="t" style="left:1991.6px;top:924.4px;font:20px/1 'Liberation Serif',serif;color:#cbc9c5;">V Total</div>
<div class="t" style="left:2236.0px;top:924.4px;font:20px/1 'Liberation Serif',serif;color:#cbc9c5;">2237</div>
<div class="t" style="left:2349.7px;top:924.4px;font:20px/1 'Liberation Serif',serif;color:#cbc9c5;">2222</div>
<div class="t" style="left:2463.9px;top:924.4px;font:20px/1 'Liberation Serif',serif;color:#cbc9c5;">2222</div>
<div class="t" style="left:2577.7px;top:924.4px;font:20px/1 'Liberation Serif',serif;color:#cbc9c5;">2250</div>
<div class="t" style="left:2788.2px;top:924.4px;font:20px/1 'Liberation Serif',serif;color:#cbc9c5;">Pixels</div>
<div class="t" style="left:1991.6px;top:951.4px;font:20px/1 'Liberation Serif',serif;color:#cbc9c5;">V Pixels</div>
<div class="t" style="left:2236.0px;top:951.4px;font:20px/1 'Liberation Serif',serif;color:#cbc9c5;">2160</div>
<div class="t" style="left:2349.7px;top:951.4px;font:20px/1 'Liberation Serif',serif;color:#cbc9c5;">2160</div>
<div class="t" style="left:2463.9px;top:951.4px;font:20px/1 'Liberation Serif',serif;color:#cbc9c5;">2160</div>
<div class="t" style="left:2577.7px;top:951.4px;font:20px/1 'Liberation Serif',serif;color:#cbc9c5;">2160</div>
<div class="t" style="left:2788.2px;top:951.4px;font:20px/1 'Liberation Serif',serif;color:#cbc9c5;">Pixels</div>
<div class="t" style="left:1991.6px;top:980.4px;font:20px/1 'Liberation Serif',serif;color:#cbc9c5;">V Blank</div>
<div class="t" style="left:2236.0px;top:980.4px;font:20px/1 'Liberation Serif',serif;color:#cbc9c5;">77</div>
<div class="t" style="left:2349.7px;top:980.4px;font:20px/1 'Liberation Serif',serif;color:#cbc9c5;">62</div>
<div class="t" style="left:2463.9px;top:980.4px;font:20px/1 'Liberation Serif',serif;color:#cbc9c5;">62</div>
<div class="a" style="left:2577.7px;top:977.7px;width:205.3px;height:26.8px;background:#202223;border:2px solid;border-color:#111 #746c60 #746c60 #111;"></div>
<div class="t" style="left:2582.7px;top:982.9px;font:16.67px/1 'Liberation Sans',sans-serif;color:#dad8d4;">90</div>
<div class="t" style="left:2788.2px;top:980.4px;font:20px/1 'Liberation Serif',serif;color:#cbc9c5;">Pixels</div>
<div class="t" style="left:1991.6px;top:1010.4px;font:20px/1 'Liberation Serif',serif;color:#cbc9c5;">V Front Porch</div>
<div class="t" style="left:2236.0px;top:1010.4px;font:20px/1 'Liberation Serif',serif;color:#cbc9c5;">3</div>
<div class="t" style="left:2349.7px;top:1010.4px;font:20px/1 'Liberation Serif',serif;color:#cbc9c5;">3</div>
<div class="t" style="left:2463.9px;top:1010.4px;font:20px/1 'Liberation Serif',serif;color:#cbc9c5;">48</div>
<div class="t" style="left:2788.2px;top:1010.4px;font:20px/1 'Liberation Serif',serif;color:#cbc9c5;">Pixels</div>
<div class="t" style="left:1991.6px;top:1037.4px;font:20px/1 'Liberation Serif',serif;color:#cbc9c5;">V Sync</div>
<div class="t" style="left:2236.0px;top:1037.4px;font:20px/1 'Liberation Serif',serif;color:#cbc9c5;">5</div>
<div class="t" style="left:2349.7px;top:1037.4px;font:20px/1 'Liberation Serif',serif;color:#cbc9c5;">5</div>
<div class="t" style="left:2463.9px;top:1037.4px;font:20px/1 'Liberation Serif',serif;color:#cbc9c5;">8</div>
<div class="t" style="left:2788.2px;top:1037.4px;font:20px/1 'Liberation Serif',serif;color:#cbc9c5;">Pixels</div>
<div class="t" style="left:1991.6px;top:1064.4px;font:20px/1 'Liberation Serif',serif;color:#cbc9c5;">V Back Porch</div>
<div class="t" style="left:2236.0px;top:1064.4px;font:20px/1 'Liberation Serif',serif;color:#cbc9c5;">69</div>
<div class="t" style="left:2349.7px;top:1064.4px;font:20px/1 'Liberation Serif',serif;color:#cbc9c5;">54</div>
<div class="t" style="left:2463.9px;top:1064.4px;font:20px/1 'Liberation Serif',serif;color:#cbc9c5;">6</div>
<div class="t" style="left:2788.2px;top:1064.4px;font:20px/1 'Liberation Serif',serif;color:#cbc9c5;">Pixels</div>
<div class="t" style="left:1991.6px;top:1091.4px;font:20px/1 'Liberation Serif',serif;color:#cbc9c5;">V Freq</div>
<div class="t" style="left:2236.0px;top:1091.4px;font:20px/1 'Liberation Serif',serif;color:#cbc9c5;">59.981</div>
<div class="t" style="left:2349.7px;top:1091.4px;font:20px/1 'Liberation Serif',serif;color:#cbc9c5;">59.997</div>
<div class="t" style="left:2463.9px;top:1091.4px;font:20px/1 'Liberation Serif',serif;color:#cbc9c5;">60</div>
<div class="t" style="left:2577.7px;top:1091.4px;font:20px/1 'Liberation Serif',serif;color:#cbc9c5;">60</div>
<div class="t" style="left:2788.2px;top:1091.4px;font:20px/1 'Liberation Serif',serif;color:#cbc9c5;">Hz</div>
<div class="t" style="left:1991.6px;top:1118.4px;font:20px/1 'Liberation Serif',serif;color:#cbc9c5;">V Period</div>
<div class="t" style="left:2236.0px;top:1118.4px;font:20px/1 'Liberation Serif',serif;color:#cbc9c5;">16.672</div>
<div class="t" style="left:2349.7px;top:1118.4px;font:20px/1 'Liberation Serif',serif;color:#cbc9c5;">16.668</div>
<div class="t" style="left:2463.9px;top:1118.4px;font:20px/1 'Liberation Serif',serif;color:#cbc9c5;">16.667</div>
<div class="t" style="left:2577.7px;top:1118.4px;font:20px/1 'Liberation Serif',serif;color:#cbc9c5;">16.667</div>
<div class="t" style="left:2788.2px;top:1118.4px;font:20px/1 'Liberation Serif',serif;color:#cbc9c5;">ms</div>
<div class="t" style="left:1991.6px;top:1145.4px;font:20px/1 'Liberation Serif',serif;color:#cbc9c5;">Total BW</div>
<div class="t" style="left:2236.0px;top:1145.4px;font:20px/1 'Liberation Serif',serif;color:#cbc9c5;">17106</div>
<div class="t" style="left:2349.7px;top:1145.4px;font:20px/1 'Liberation Serif',serif;color:#cbc9c5;">12798</div>
<div class="t" style="left:2463.9px;top:1145.4px;font:20px/1 'Liberation Serif',serif;color:#cbc9c5;">12543</div>
<div class="t" style="left:2577.7px;top:1145.4px;font:20px/1 'Liberation Serif',serif;color:#cbc9c5;">14256</div>
<div class="t" style="left:2788.2px;top:1145.4px;font:20px/1 'Liberation Serif',serif;color:#cbc9c5;">Mbit/s</div>
<div class="t" style="left:1991.6px;top:1172.4px;font:20px/1 'Liberation Serif',serif;color:#cbc9c5;">Active BW</div>
<div class="t" style="left:2236.0px;top:1172.4px;font:20px/1 'Liberation Serif',serif;color:#cbc9c5;">11940</div>
<div class="t" style="left:2349.7px;top:1172.4px;font:20px/1 'Liberation Serif',serif;color:#cbc9c5;">11943</div>
<div class="t" style="left:2463.9px;top:1172.4px;font:20px/1 'Liberation Serif',serif;color:#cbc9c5;">11944</div>
<div class="t" style="left:2577.7px;top:1172.4px;font:20px/1 'Liberation Serif',serif;color:#cbc9c5;">11944</div>
<div class="t" style="left:2788.2px;top:1172.4px;font:20px/1 'Liberation Serif',serif;color:#cbc9c5;">Mbit/s</div>
<div class="t" style="left:1991.6px;top:1199.4px;font:20px/1 'Liberation Serif',serif;color:#cbc9c5;">DisplayPort 2.0</div>
<div class="t" style="left:2236.0px;top:1199.4px;font:20px/1 'Liberation Serif',serif;color:#cbc9c5;"><span style="color:#5fd85f">Ok</span> (22%)</div>
<div class="t" style="left:2349.7px;top:1199.4px;font:20px/1 'Liberation Serif',serif;color:#cbc9c5;"><span style="color:#5fd85f">Ok</span> (16%)</div>
<div class="t" style="left:2463.9px;top:1199.4px;font:20px/1 'Liberation Serif',serif;color:#cbc9c5;"><span style="color:#5fd85f">Ok</span> (16%)</div>
<div class="t" style="left:2577.7px;top:1199.4px;font:20px/1 'Liberation Serif',serif;color:#cbc9c5;"><span style="color:#5fd85f">Ok</span> (18%)</div>
<div class="t" style="left:2788.2px;top:1199.4px;font:20px/1 'Liberation Serif',serif;color:#cbc9c5;">Max BW 77,575 Mbit/s</div>
<div class="t" style="left:1991.6px;top:1226.4px;font:20px/1 'Liberation Serif',serif;color:#cbc9c5;">DisplayPort HBR3</div>
<div class="t" style="left:2236.0px;top:1226.4px;font:20px/1 'Liberation Serif',serif;color:#cbc9c5;"><span style="color:#5fd85f">Ok</span> (66%)</div>
<div class="t" style="left:2349.7px;top:1226.4px;font:20px/1 'Liberation Serif',serif;color:#cbc9c5;"><span style="color:#5fd85f">Ok</span> (49%)</div>
<div class="t" style="left:2463.9px;top:1226.4px;font:20px/1 'Liberation Serif',serif;color:#cbc9c5;"><span style="color:#5fd85f">Ok</span> (48%)</div>
<div class="t" style="left:2577.7px;top:1226.4px;font:20px/1 'Liberation Serif',serif;color:#cbc9c5;"><span style="color:#5fd85f">Ok</span> (55%)</div>
<div class="t" style="left:2788.2px;top:1226.4px;font:20px/1 'Liberation Serif',serif;color:#cbc9c5;">Max BW 25,920 Mbit/s</div>
<div class="t" style="left:1991.6px;top:1253.4px;font:20px/1 'Liberation Serif',serif;color:#cbc9c5;">DisplayPort HBR2</div>
<div class="t" style="left:2236.0px;top:1253.4px;font:20px/1 'Liberation Serif',serif;color:#cbc9c5;"><span style="color:#5fd85f">Ok</span> (99%)</div>
<div class="t" style="left:2349.7px;top:1253.4px;font:20px/1 'Liberation Serif',serif;color:#cbc9c5;"><span style="color:#5fd85f">Ok</span> (74%)</div>
<div class="t" style="left:2463.9px;top:1253.4px;font:20px/1 'Liberation Serif',serif;color:#cbc9c5;"><span style="color:#5fd85f">Ok</span> (73%)</div>
<div class="t" style="left:2577.7px;top:1253.4px;font:20px/1 'Liberation Serif',serif;color:#cbc9c5;"><span style="color:#5fd85f">Ok</span> (83%)</div>
<div class="t" style="left:2788.2px;top:1253.4px;font:20px/1 'Liberation Serif',serif;color:#cbc9c5;">Max BW 17,280 Mbit/s</div>
<div class="t" style="left:1991.6px;top:1280.4px;font:20px/1 'Liberation Serif',serif;color:#cbc9c5;">DisplayPort HBR</div>
<div class="t" style="left:2236.0px;top:1280.4px;font:20px/1 'Liberation Serif',serif;color:#cbc9c5;"><span style="color:#e32626">No</span> (198%)</div>
<div class="t" style="left:2349.7px;top:1280.4px;font:20px/1 'Liberation Serif',serif;color:#cbc9c5;"><span style="color:#e32626">No</span> (148%)</div>
<div class="t" style="left:2463.9px;top:1280.4px;font:20px/1 'Liberation Serif',serif;color:#cbc9c5;"><span style="color:#e32626">No</span> (145%)</div>
<div class="t" style="left:2577.7px;top:1280.4px;font:20px/1 'Liberation Serif',serif;color:#cbc9c5;"><span style="color:#e32626">No</span> (165%)</div>
<div class="t" style="left:2788.2px;top:1280.4px;font:20px/1 'Liberation Serif',serif;color:#cbc9c5;">Max BW 8,640 Mbit/s</div>
<div class="t" style="left:1991.6px;top:1307.4px;font:20px/1 'Liberation Serif',serif;color:#cbc9c5;">DisplayPort RBR</div>
<div class="t" style="left:2236.0px;top:1307.4px;font:20px/1 'Liberation Serif',serif;color:#cbc9c5;"><span style="color:#e32626">No</span> (326%)</div>
<div class="t" style="left:2349.7px;top:1307.4px;font:20px/1 'Liberation Serif',serif;color:#cbc9c5;"><span style="color:#e32626">No</span> (244%)</div>
<div class="t" style="left:2463.9px;top:1307.4px;font:20px/1 'Liberation Serif',serif;color:#cbc9c5;"><span style="color:#e32626">No</span> (239%)</div>
<div class="t" style="left:2577.7px;top:1307.4px;font:20px/1 'Liberation Serif',serif;color:#cbc9c5;"><span style="color:#e32626">No</span> (272%)</div>
<div class="t" style="left:2788.2px;top:1307.4px;font:20px/1 'Liberation Serif',serif;color:#cbc9c5;">Max BW 5,240 Mbit/s</div>
<div class="t" style="left:1991.6px;top:1334.4px;font:20px/1 'Liberation Serif',serif;color:#cbc9c5;">HDMI 2.1</div>
<div class="t" style="left:2236.0px;top:1334.4px;font:20px/1 'Liberation Serif',serif;color:#cbc9c5;"><span style="color:#5fd85f">Ok</span> (40%)</div>
<div class="t" style="left:2349.7px;top:1334.4px;font:20px/1 'Liberation Serif',serif;color:#cbc9c5;"><span style="color:#5fd85f">Ok</span> (30%)</div>
<div class="t" style="left:2463.9px;top:1334.4px;font:20px/1 'Liberation Serif',serif;color:#cbc9c5;"><span style="color:#5fd85f">Ok</span> (29%)</div>
<div class="t" style="left:2577.7px;top:1334.4px;font:20px/1 'Liberation Serif',serif;color:#cbc9c5;"><span style="color:#5fd85f">Ok</span> (33%)</div>
<div class="t" style="left:2788.2px;top:1334.4px;font:20px/1 'Liberation Serif',serif;color:#cbc9c5;">Max BW 42,667 Mbit/s</div>
<div class="t" style="left:1991.6px;top:1361.4px;font:20px/1 'Liberation Serif',serif;color:#cbc9c5;">HDMI 2.0 (600 MHz)</div>
<div class="t" style="left:2236.0px;top:1361.4px;font:20px/1 'Liberation Serif',serif;color:#cbc9c5;"><span style="color:#e32626">No</span> (119%)</div>
<div class="t" style="left:2349.7px;top:1361.4px;font:20px/1 'Liberation Serif',serif;color:#cbc9c5;"><span style="color:#5fd85f">Ok</span> (89%)</div>
<div class="t" style="left:2463.9px;top:1361.4px;font:20px/1 'Liberation Serif',serif;color:#cbc9c5;"><span style="color:#5fd85f">Ok</span> (87%)</div>
<div class="t" style="left:2577.7px;top:1361.4px;font:20px/1 'Liberation Serif',serif;color:#cbc9c5;"><span style="color:#5fd85f">Ok</span> (99%)</div>
<div class="t" style="left:2788.2px;top:1361.4px;font:20px/1 'Liberation Serif',serif;color:#cbc9c5;">Max BW 14,400 Mbit/s</div>
<div class="t" style="left:1991.6px;top:1388.4px;font:20px/1 'Liberation Serif',serif;color:#cbc9c5;">HDMI 1.3/1.4 (340 MHz)</div>
<div class="t" style="left:2236.0px;top:1388.4px;font:20px/1 'Liberation Serif',serif;color:#cbc9c5;"><span style="color:#e32626">No</span> (210%)</div>
<div class="t" style="left:2349.7px;top:1388.4px;font:20px/1 'Liberation Serif',serif;color:#cbc9c5;"><span style="color:#e32626">No</span> (157%)</div>
<div class="t" style="left:2463.9px;top:1388.4px;font:20px/1 'Liberation Serif',serif;color:#cbc9c5;"><span style="color:#e32626">No</span> (154%)</div>
<div class="t" style="left:2577.7px;top:1388.4px;font:20px/1 'Liberation Serif',serif;color:#cbc9c5;"><span style="color:#e32626">No</span> (175%)</div>
<div class="t" style="left:2788.2px;top:1388.4px;font:20px/1 'Liberation Serif',serif;color:#cbc9c5;">Max BW 8,160 Mbit/s</div>
<div class="t" style="left:1991.6px;top:1415.4px;font:20px/1 'Liberation Serif',serif;color:#cbc9c5;">HDMI 1.0/1.1/1.2 (165 MHz)</div>
<div class="t" style="left:2236.0px;top:1415.4px;font:20px/1 'Liberation Serif',serif;color:#cbc9c5;"><span style="color:#e32626">No</span> (432%)</div>
<div class="t" style="left:2349.7px;top:1415.4px;font:20px/1 'Liberation Serif',serif;color:#cbc9c5;"><span style="color:#e32626">No</span> (323%)</div>
<div class="t" style="left:2463.9px;top:1415.4px;font:20px/1 'Liberation Serif',serif;color:#cbc9c5;"><span style="color:#e32626">No</span> (317%)</div>
<div class="t" style="left:2577.7px;top:1415.4px;font:20px/1 'Liberation Serif',serif;color:#cbc9c5;"><span style="color:#e32626">No</span> (360%)</div>
<div class="t" style="left:2788.2px;top:1415.4px;font:20px/1 'Liberation Serif',serif;color:#cbc9c5;">Max BW 3,960 Mbit/s</div>
<div class="t" style="left:1991.6px;top:1442.4px;font:20px/1 'Liberation Serif',serif;color:#cbc9c5;">DVI-DL (330 MHz)</div>
<div class="t" style="left:2236.0px;top:1442.4px;font:20px/1 'Liberation Serif',serif;color:#cbc9c5;"><span style="color:#e32626">No</span> (216%)</div>
<div class="t" style="left:2349.7px;top:1442.4px;font:20px/1 'Liberation Serif',serif;color:#cbc9c5;"><span style="color:#e32626">No</span> (162%)</div>
<div class="t" style="left:2463.9px;top:1442.4px;font:20px/1 'Liberation Serif',serif;color:#cbc9c5;"><span style="color:#e32626">No</span> (158%)</div>
<div class="t" style="left:2577.7px;top:1442.4px;font:20px/1 'Liberation Serif',serif;color:#cbc9c5;"><span style="color:#e32626">No</span> (180%)</div>
<div class="t" style="left:2788.2px;top:1442.4px;font:20px/1 'Liberation Serif',serif;color:#cbc9c5;">Max BW 7,920 Mbit/s</div>
<div class="t" style="left:1991.6px;top:1469.4px;font:20px/1 'Liberation Serif',serif;color:#cbc9c5;">DVI-D</div>
<div class="t" style="left:2236.0px;top:1469.4px;font:20px/1 'Liberation Serif',serif;color:#cbc9c5;"><span style="color:#e32626">No</span> (432%)</div>
<div class="t" style="left:2349.7px;top:1469.4px;font:20px/1 'Liberation Serif',serif;color:#cbc9c5;"><span style="color:#e32626">No</span> (323%)</div>
<div class="t" style="left:2463.9px;top:1469.4px;font:20px/1 'Liberation Serif',serif;color:#cbc9c5;"><span style="color:#e32626">No</span> (317%)</div>
<div class="t" style="left:2577.7px;top:1469.4px;font:20px/1 'Liberation Serif',serif;color:#cbc9c5;"><span style="color:#e32626">No</span> (360%)</div>
<div class="t" style="left:2788.2px;top:1469.4px;font:20px/1 'Liberation Serif',serif;color:#cbc9c5;">Max BW 3960 Mbit/s</div>
<div class="t" style="left:1991.6px;top:1496.4px;font:20px/1 'Liberation Serif',serif;color:#cbc9c5;">RFC4175/100M Ethernet</div>
<div class="t" style="left:2236.0px;top:1496.4px;font:20px/1 'Liberation Serif',serif;color:#cbc9c5;"><span style="color:#e32626">No</span> (12724%)</div>
<div class="t" style="left:2349.7px;top:1496.4px;font:20px/1 'Liberation Serif',serif;color:#cbc9c5;"><span style="color:#e32626">No</span> (12727%)</div>
<div class="t" style="left:2463.9px;top:1496.4px;font:20px/1 'Liberation Serif',serif;color:#cbc9c5;"><span style="color:#e32626">No</span> (12728%)</div>
<div class="t" style="left:2577.7px;top:1496.4px;font:20px/1 'Liberation Serif',serif;color:#cbc9c5;"><span style="color:#e32626">No</span> (12728%)</div>
<div class="t" style="left:2788.2px;top:1496.4px;font:20px/1 'Liberation Serif',serif;color:#cbc9c5;">Max BW 94 Mbit/s</div>
<div class="t" style="left:1991.6px;top:1523.4px;font:20px/1 'Liberation Serif',serif;color:#cbc9c5;">RFC4175/1 GigE</div>
<div class="t" style="left:2236.0px;top:1523.4px;font:20px/1 'Liberation Serif',serif;color:#cbc9c5;"><span style="color:#e32626">No</span> (1272%)</div>
<div class="t" style="left:2349.7px;top:1523.4px;font:20px/1 'Liberation Serif',serif;color:#cbc9c5;"><span style="color:#e32626">No</span> (1273%)</div>
<div class="t" style="left:2463.9px;top:1523.4px;font:20px/1 'Liberation Serif',serif;color:#cbc9c5;"><span style="color:#e32626">No</span> (1273%)</div>
<div class="t" style="left:2577.7px;top:1523.4px;font:20px/1 'Liberation Serif',serif;color:#cbc9c5;"><span style="color:#e32626">No</span> (1273%)</div>
<div class="t" style="left:2788.2px;top:1523.4px;font:20px/1 'Liberation Serif',serif;color:#cbc9c5;">Max BW 938 Mbit/s</div>
<div class="t" style="left:1991.6px;top:1550.4px;font:20px/1 'Liberation Serif',serif;color:#cbc9c5;">RFC4175/10 GigE</div>
<div class="t" style="left:2236.0px;top:1550.4px;font:20px/1 'Liberation Serif',serif;color:#cbc9c5;"><span style="color:#e32626">No</span> (127%)</div>
<div class="t" style="left:2349.7px;top:1550.4px;font:20px/1 'Liberation Serif',serif;color:#cbc9c5;"><span style="color:#e32626">No</span> (127%)</div>
<div class="t" style="left:2463.9px;top:1550.4px;font:20px/1 'Liberation Serif',serif;color:#cbc9c5;"><span style="color:#e32626">No</span> (127%)</div>
<div class="t" style="left:2577.7px;top:1550.4px;font:20px/1 'Liberation Serif',serif;color:#cbc9c5;"><span style="color:#e32626">No</span> (127%)</div>
<div class="t" style="left:2788.2px;top:1550.4px;font:20px/1 'Liberation Serif',serif;color:#cbc9c5;">Max BW 9384 Mbit/s</div>
</body></html>
